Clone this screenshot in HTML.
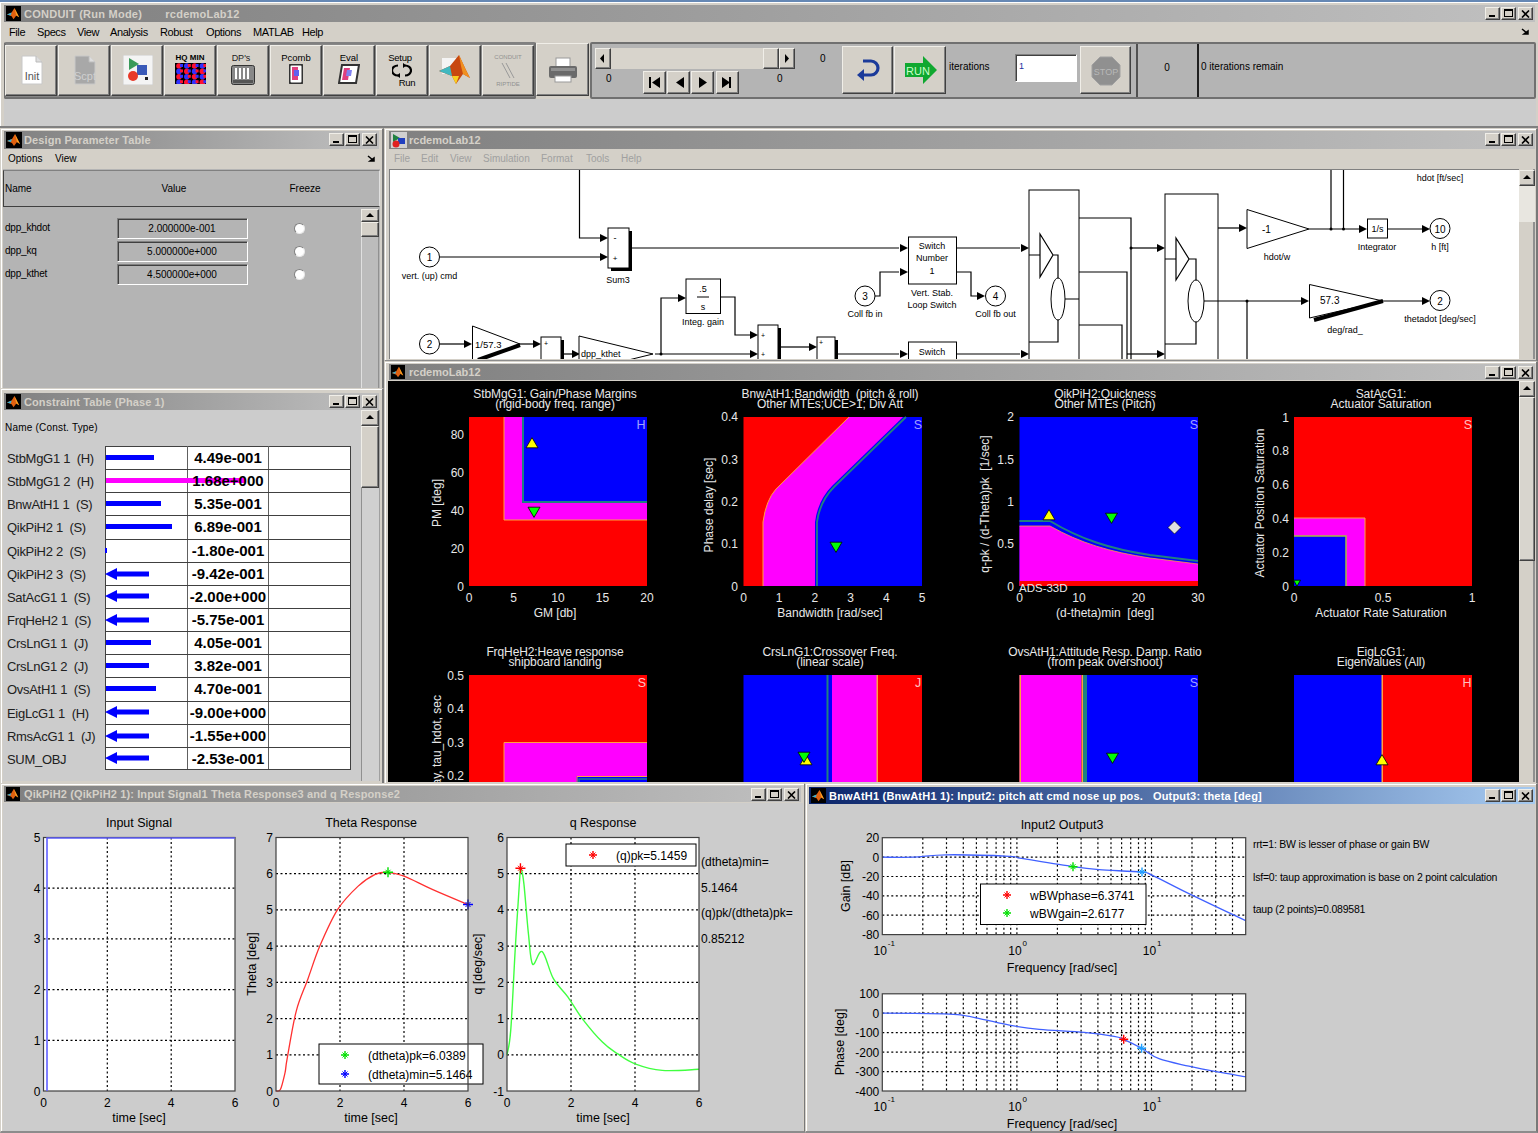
<!DOCTYPE html><html><head><meta charset="utf-8"><style>html,body{margin:0;padding:0;width:1538px;height:1133px;overflow:hidden;position:relative;font-family:"Liberation Sans",sans-serif;background:#d4d0c8}</style></head><body><div style="position:absolute;left:0px;top:0px;width:1538px;height:2px;background:#6688b4"></div><div style="position:absolute;left:0px;top:2px;width:1538px;height:1131px;background:#d4d0c8"></div><div style="position:absolute;left:0px;top:2px;width:1538px;height:1px;background:#fff"></div><div style="position:absolute;left:0px;top:2px;width:1px;height:1131px;background:#fff"></div><div style="position:absolute;left:4px;top:5px;width:1531px;height:17px;background:linear-gradient(to right,#808080,#c0c0c0)"></div><svg style="position:absolute;left:6px;top:6px" width="15" height="15" viewBox="0 0 16 16"><rect width="16" height="16" fill="#000"/><path d="M1 9 L6 7 L9 2 L12 8 L14 12 L11 10 L8 14 L6 11 Z" fill="#e06010"/><path d="M9 2 L12 8 L14 12 L11 10 Z" fill="#f8a020"/><path d="M1 9 L6 7 L5 10 Z" fill="#30b0d8"/></svg><div style="position:absolute;left:24px;top:7px;font-size:11px;line-height:14px;color:#d4d0c8;font-weight:bold;white-space:nowrap;letter-spacing:0.25px">CONDUIT (Run Mode) &nbsp; &nbsp; &nbsp; rcdemoLab12</div><div style="position:absolute;left:1485px;top:7px;width:15px;height:13px;background:#d4d0c8;box-sizing:border-box;border-top:1px solid #f0eee8;border-left:1px solid #f0eee8;border-right:1px solid #404040;border-bottom:1px solid #404040;box-shadow:inset -1px -1px 0 #808080;"></div><div style="position:absolute;left:1489px;top:15px;width:6px;height:2px;background:#000"></div><div style="position:absolute;left:1501px;top:7px;width:15px;height:13px;background:#d4d0c8;box-sizing:border-box;border-top:1px solid #f0eee8;border-left:1px solid #f0eee8;border-right:1px solid #404040;border-bottom:1px solid #404040;box-shadow:inset -1px -1px 0 #808080;"></div><div style="position:absolute;left:1504px;top:9px;width:9px;height:8px;box-sizing:border-box;border:1px solid #000;border-top:2px solid #000"></div><div style="position:absolute;left:1518px;top:7px;width:15px;height:13px;background:#d4d0c8;box-sizing:border-box;border-top:1px solid #f0eee8;border-left:1px solid #f0eee8;border-right:1px solid #404040;border-bottom:1px solid #404040;box-shadow:inset -1px -1px 0 #808080;"></div><svg style="position:absolute;left:1521px;top:10px" width="9" height="8"><path d="M1 0.5 L8 7.5 M8 0.5 L1 7.5" stroke="#000" stroke-width="1.6"/></svg><div style="position:absolute;left:9px;top:26px;font-size:11px;line-height:13px;color:#000;font-weight:normal;white-space:nowrap;letter-spacing:-0.4px">File</div><div style="position:absolute;left:37px;top:26px;font-size:11px;line-height:13px;color:#000;font-weight:normal;white-space:nowrap;letter-spacing:-0.4px">Specs</div><div style="position:absolute;left:77px;top:26px;font-size:11px;line-height:13px;color:#000;font-weight:normal;white-space:nowrap;letter-spacing:-0.4px">View</div><div style="position:absolute;left:110px;top:26px;font-size:11px;line-height:13px;color:#000;font-weight:normal;white-space:nowrap;letter-spacing:-0.4px">Analysis</div><div style="position:absolute;left:160px;top:26px;font-size:11px;line-height:13px;color:#000;font-weight:normal;white-space:nowrap;letter-spacing:-0.4px">Robust</div><div style="position:absolute;left:206px;top:26px;font-size:11px;line-height:13px;color:#000;font-weight:normal;white-space:nowrap;letter-spacing:-0.4px">Options</div><div style="position:absolute;left:253px;top:26px;font-size:11px;line-height:13px;color:#000;font-weight:normal;white-space:nowrap;letter-spacing:-0.4px">MATLAB</div><div style="position:absolute;left:302px;top:26px;font-size:11px;line-height:13px;color:#000;font-weight:normal;white-space:nowrap;letter-spacing:-0.4px">Help</div><svg style="position:absolute;left:1521px;top:28px" width="8" height="8"><path d="M1 1 L6 5 M3 6 L7 6 L7 3 Z" stroke="#000" stroke-width="1.5" fill="#000"/></svg><div style="position:absolute;left:4px;top:42px;width:532px;height:57px;box-sizing:border-box;border:2px solid #707070;border-top:2px solid #808080;background:#888;border-radius:2px"></div><div style="position:absolute;left:5px;top:45px;width:52px;height:51px;background:#d4d0c8;box-sizing:border-box;border-top:1px solid #f0eee8;border-left:1px solid #f0eee8;border-right:1px solid #404040;border-bottom:1px solid #404040;box-shadow:inset -1px -1px 0 #808080;"></div><svg style="position:absolute;left:19px;top:55px" width="26" height="30"><path d="M3 1 L17 1 L23 7 L23 29 L3 29 Z" fill="#fff" stroke="#c8c8c8"/><path d="M17 1 L17 7 L23 7" fill="#ddd" stroke="#bbb"/><text x="13" y="25" font-family="Liberation Sans" font-size="11" text-anchor="middle" fill="#555">Init</text></svg><div style="position:absolute;left:58px;top:45px;width:52px;height:51px;background:#d4d0c8;box-sizing:border-box;border-top:1px solid #f0eee8;border-left:1px solid #f0eee8;border-right:1px solid #404040;border-bottom:1px solid #404040;box-shadow:inset -1px -1px 0 #808080;"></div><svg style="position:absolute;left:72px;top:55px" width="26" height="30"><path d="M3 1 L17 1 L23 7 L23 29 L3 29 Z" fill="#a8a8a8" stroke="#c8c8c8"/><path d="M17 1 L17 7 L23 7" fill="#ddd" stroke="#bbb"/><text x="13" y="25" font-family="Liberation Sans" font-size="11" text-anchor="middle" fill="#d0d0d0">Scpt</text></svg><div style="position:absolute;left:111px;top:45px;width:52px;height:51px;background:#d4d0c8;box-sizing:border-box;border-top:1px solid #f0eee8;border-left:1px solid #f0eee8;border-right:1px solid #404040;border-bottom:1px solid #404040;box-shadow:inset -1px -1px 0 #808080;"></div><svg style="position:absolute;left:123px;top:55px" width="30" height="30"><rect x="0" y="0" width="30" height="30" fill="#f4f4f4" stroke="#ccc"/><path d="M6 3 L16 9 L6 15 Z" fill="#3a9a5a"/><rect x="14" y="10" width="10" height="10" fill="#3a5ab8"/><circle cx="10" cy="21" r="5" fill="#e83828"/><rect x="22" y="22" width="3" height="3" fill="#222"/></svg><div style="position:absolute;left:164px;top:45px;width:52px;height:51px;background:#d4d0c8;box-sizing:border-box;border-top:1px solid #f0eee8;border-left:1px solid #f0eee8;border-right:1px solid #404040;border-bottom:1px solid #404040;box-shadow:inset -1px -1px 0 #808080;"></div><div style="position:absolute;left:-210px;width:800px;text-align:center;top:53px;font-size:8px;line-height:9px;color:#000;font-weight:bold;white-space:nowrap;">HQ MIN</div><svg style="position:absolute;left:175px;top:63px" width="31" height="21"><rect width="31" height="21" fill="#000"/><circle cx="4.0" cy="3.0" r="2.8" fill="#ff1030"/><rect x="5.0" y="1.0" width="3" height="3" fill="#3030ff"/><circle cx="11.8" cy="3.0" r="2.8" fill="#3030ff"/><rect x="12.8" y="1.0" width="3" height="3" fill="#ff1030"/><circle cx="19.6" cy="3.0" r="2.8" fill="#ff1030"/><rect x="20.6" y="1.0" width="3" height="3" fill="#3030ff"/><circle cx="27.4" cy="3.0" r="2.8" fill="#3030ff"/><rect x="28.4" y="1.0" width="3" height="3" fill="#ff1030"/><circle cx="4.0" cy="8.4" r="2.8" fill="#3030ff"/><rect x="5.0" y="6.4" width="3" height="3" fill="#ff1030"/><circle cx="11.8" cy="8.4" r="2.8" fill="#ff1030"/><rect x="12.8" y="6.4" width="3" height="3" fill="#3030ff"/><circle cx="19.6" cy="8.4" r="2.8" fill="#3030ff"/><rect x="20.6" y="6.4" width="3" height="3" fill="#ff1030"/><circle cx="27.4" cy="8.4" r="2.8" fill="#ff1030"/><rect x="28.4" y="6.4" width="3" height="3" fill="#3030ff"/><circle cx="4.0" cy="13.8" r="2.8" fill="#ff1030"/><rect x="5.0" y="11.8" width="3" height="3" fill="#3030ff"/><circle cx="11.8" cy="13.8" r="2.8" fill="#3030ff"/><rect x="12.8" y="11.8" width="3" height="3" fill="#ff1030"/><circle cx="19.6" cy="13.8" r="2.8" fill="#ff1030"/><rect x="20.6" y="11.8" width="3" height="3" fill="#3030ff"/><circle cx="27.4" cy="13.8" r="2.8" fill="#3030ff"/><rect x="28.4" y="11.8" width="3" height="3" fill="#ff1030"/><circle cx="4.0" cy="19.200000000000003" r="2.8" fill="#3030ff"/><rect x="5.0" y="17.200000000000003" width="3" height="3" fill="#ff1030"/><circle cx="11.8" cy="19.200000000000003" r="2.8" fill="#ff1030"/><rect x="12.8" y="17.200000000000003" width="3" height="3" fill="#3030ff"/><circle cx="19.6" cy="19.200000000000003" r="2.8" fill="#3030ff"/><rect x="20.6" y="17.200000000000003" width="3" height="3" fill="#ff1030"/><circle cx="27.4" cy="19.200000000000003" r="2.8" fill="#ff1030"/><rect x="28.4" y="17.200000000000003" width="3" height="3" fill="#3030ff"/></svg><div style="position:absolute;left:217px;top:45px;width:52px;height:51px;background:#d4d0c8;box-sizing:border-box;border-top:1px solid #f0eee8;border-left:1px solid #f0eee8;border-right:1px solid #404040;border-bottom:1px solid #404040;box-shadow:inset -1px -1px 0 #808080;"></div><div style="position:absolute;left:-159px;width:800px;text-align:center;top:53px;font-size:9px;line-height:10px;color:#222;font-weight:normal;white-space:nowrap;">DP's</div><svg style="position:absolute;left:231px;top:65px" width="24" height="20"><rect x="0.5" y="0.5" width="23" height="19" rx="2" fill="#888" stroke="#333"/><path d="M5 3 V14 M9 3 V14 M13 3 V14 M17 3 V14" stroke="#fff" stroke-width="2"/><rect x="2" y="15" width="20" height="3" fill="#555"/></svg><div style="position:absolute;left:270px;top:45px;width:52px;height:51px;background:#d4d0c8;box-sizing:border-box;border-top:1px solid #f0eee8;border-left:1px solid #f0eee8;border-right:1px solid #404040;border-bottom:1px solid #404040;box-shadow:inset -1px -1px 0 #808080;"></div><div style="position:absolute;left:-104px;width:800px;text-align:center;top:53px;font-size:9.5px;line-height:10px;color:#000;font-weight:normal;white-space:nowrap;">Pcomb</div><svg style="position:absolute;left:289px;top:64px" width="14" height="20"><rect x="0.5" y="0.5" width="13" height="19" rx="2" fill="#fff" stroke="#333" stroke-width="2"/><rect x="3" y="3" width="6" height="13" fill="#e04080"/><rect x="5" y="6" width="5" height="6" fill="#6060f0"/></svg><div style="position:absolute;left:323px;top:45px;width:52px;height:51px;background:#d4d0c8;box-sizing:border-box;border-top:1px solid #f0eee8;border-left:1px solid #f0eee8;border-right:1px solid #404040;border-bottom:1px solid #404040;box-shadow:inset -1px -1px 0 #808080;"></div><div style="position:absolute;left:-51px;width:800px;text-align:center;top:53px;font-size:9.5px;line-height:10px;color:#000;font-weight:normal;white-space:nowrap;">Eval</div><svg style="position:absolute;left:338px;top:64px" width="22" height="20"><path d="M4 1 L21 1 L18 19 L1 19 Z" fill="#fff" stroke="#333" stroke-width="2"/><path d="M6 4 L12 4 L10 16 L4 16 Z" fill="#e04080"/><path d="M9 6 L14 6 L13 12 L8 12 Z" fill="#8080f0"/></svg><div style="position:absolute;left:376px;top:45px;width:52px;height:51px;background:#d4d0c8;box-sizing:border-box;border-top:1px solid #f0eee8;border-left:1px solid #f0eee8;border-right:1px solid #404040;border-bottom:1px solid #404040;box-shadow:inset -1px -1px 0 #808080;"></div><div style="position:absolute;left:0px;width:800px;text-align:center;top:53px;font-size:9.5px;line-height:10px;color:#000;font-weight:normal;white-space:nowrap;letter-spacing:-0.3px">Setup</div><svg style="position:absolute;left:392px;top:63px" width="20" height="15"><path d="M6 2.5 A6 5 0 1 0 6 12.5" fill="none" stroke="#000" stroke-width="2.2"/><path d="M13 12.5 A6 5 0 1 0 13 2.5" fill="none" stroke="#000" stroke-width="2.2"/><path d="M11 0 L14.5 2.5 L11 5 Z" fill="#000"/><path d="M8 10 L4.5 12.5 L8 15 Z" fill="#000"/></svg><div style="position:absolute;left:7px;width:800px;text-align:center;top:78px;font-size:9.5px;line-height:10px;color:#000;font-weight:normal;white-space:nowrap;letter-spacing:-0.3px">Run</div><div style="position:absolute;left:429px;top:45px;width:52px;height:51px;background:#d4d0c8;box-sizing:border-box;border-top:1px solid #f0eee8;border-left:1px solid #f0eee8;border-right:1px solid #404040;border-bottom:1px solid #404040;box-shadow:inset -1px -1px 0 #808080;"></div><svg style="position:absolute;left:439px;top:54px" width="32" height="32"><rect x="3" y="4" width="14" height="16" fill="#f4f4f4"/><path d="M0 17 L11 12 L20 1 L26 14 L31 24 L24 20 L17 30 L13 22 Z" fill="#c84810"/><path d="M20 1 L26 14 L31 24 L24 20 L22 12 Z" fill="#f09020"/><path d="M0 17 L11 12 L13 22 Z" fill="#40b8c0"/><path d="M17 30 L13 22 L20 22 Z" fill="#f8d020"/></svg><div style="position:absolute;left:482px;top:45px;width:52px;height:51px;background:#d4d0c8;box-sizing:border-box;border-top:1px solid #f0eee8;border-left:1px solid #f0eee8;border-right:1px solid #404040;border-bottom:1px solid #404040;box-shadow:inset -1px -1px 0 #808080;"></div><div style="position:absolute;left:108px;width:800px;text-align:center;top:54px;font-size:6px;line-height:7px;color:#909090;font-weight:normal;white-space:nowrap;">CONDUIT</div><svg style="position:absolute;left:500px;top:62px" width="16" height="18"><path d="M2 1 L10 16 M6 1 L14 16" stroke="#999" stroke-width="1"/></svg><div style="position:absolute;left:108px;width:800px;text-align:center;top:81px;font-size:6px;line-height:7px;color:#909090;font-weight:normal;white-space:nowrap;">RIPTIDE</div><div style="position:absolute;left:536px;top:43px;width:53px;height:53px;background:#d4d0c8;box-sizing:border-box;border-top:1px solid #f0eee8;border-left:1px solid #f0eee8;border-right:1px solid #404040;border-bottom:1px solid #404040;box-shadow:inset -1px -1px 0 #808080;"></div><svg style="position:absolute;left:548px;top:57px" width="30" height="28"><rect x="8" y="1" width="14" height="9" fill="#fff" stroke="#999"/><rect x="1" y="9" width="28" height="12" rx="2" fill="#6a6a6a"/><rect x="3" y="11" width="24" height="3" fill="#909090"/><rect x="7" y="19" width="16" height="6" fill="#fff" stroke="#999"/></svg><div style="position:absolute;left:590px;top:42px;width:946px;height:57px;box-sizing:border-box;border:2px solid #707070;background:#b4b4b4;border-radius:2px"></div><div style="position:absolute;left:595px;top:48px;width:200px;height:21px;background:#d8d4cc"></div><div style="position:absolute;left:595px;top:48px;width:16px;height:21px;background:#d4d0c8;box-sizing:border-box;border-top:1px solid #f0eee8;border-left:1px solid #f0eee8;border-right:1px solid #404040;border-bottom:1px solid #404040;box-shadow:inset -1px -1px 0 #808080;"></div><svg style="position:absolute;left:600px;top:54px" width="6" height="9"><path d="M4 0 L0 4.5 L4 9 Z" fill="#000"/></svg><div style="position:absolute;left:763px;top:48px;width:16px;height:21px;background:#d4d0c8;box-sizing:border-box;border-top:1px solid #f0eee8;border-left:1px solid #f0eee8;border-right:1px solid #404040;border-bottom:1px solid #404040;box-shadow:inset -1px -1px 0 #808080;"></div><div style="position:absolute;left:779px;top:48px;width:16px;height:21px;background:#d4d0c8;box-sizing:border-box;border-top:1px solid #f0eee8;border-left:1px solid #f0eee8;border-right:1px solid #404040;border-bottom:1px solid #404040;box-shadow:inset -1px -1px 0 #808080;"></div><svg style="position:absolute;left:785px;top:54px" width="6" height="9"><path d="M0 0 L4 4.5 L0 9 Z" fill="#000"/></svg><div style="position:absolute;left:606px;top:73px;font-size:10px;line-height:12px;color:#000;font-weight:normal;white-space:nowrap;">0</div><div style="position:absolute;left:777px;top:73px;font-size:10px;line-height:12px;color:#000;font-weight:normal;white-space:nowrap;">0</div><div style="position:absolute;left:820px;top:53px;font-size:10px;line-height:12px;color:#000;font-weight:normal;white-space:nowrap;">0</div><div style="position:absolute;left:643px;top:71px;width:23px;height:23px;background:#d4d0c8;box-sizing:border-box;border-top:1px solid #f0eee8;border-left:1px solid #f0eee8;border-right:1px solid #404040;border-bottom:1px solid #404040;box-shadow:inset -1px -1px 0 #808080;"></div><div style="position:absolute;left:667px;top:71px;width:23px;height:23px;background:#d4d0c8;box-sizing:border-box;border-top:1px solid #f0eee8;border-left:1px solid #f0eee8;border-right:1px solid #404040;border-bottom:1px solid #404040;box-shadow:inset -1px -1px 0 #808080;"></div><div style="position:absolute;left:691px;top:71px;width:23px;height:23px;background:#d4d0c8;box-sizing:border-box;border-top:1px solid #f0eee8;border-left:1px solid #f0eee8;border-right:1px solid #404040;border-bottom:1px solid #404040;box-shadow:inset -1px -1px 0 #808080;"></div><div style="position:absolute;left:716px;top:71px;width:23px;height:23px;background:#d4d0c8;box-sizing:border-box;border-top:1px solid #f0eee8;border-left:1px solid #f0eee8;border-right:1px solid #404040;border-bottom:1px solid #404040;box-shadow:inset -1px -1px 0 #808080;"></div><svg style="position:absolute;left:649px;top:76px" width="84" height="13"><rect x="0" y="1" width="2" height="11" fill="#000"/><path d="M11 1 L3 6.5 L11 12 Z" fill="#000"/><path d="M35 1 L27 6.5 L35 12 Z" fill="#000"/><path d="M50 1 L58 6.5 L50 12 Z" fill="#000"/><path d="M73 1 L81 6.5 L73 12 Z" fill="#000"/><rect x="80" y="1" width="2" height="11" fill="#000"/></svg><div style="position:absolute;left:842px;top:46px;width:51px;height:48px;background:#d4d0c8;box-sizing:border-box;border-top:1px solid #f0eee8;border-left:1px solid #f0eee8;border-right:1px solid #404040;border-bottom:1px solid #404040;box-shadow:inset -1px -1px 0 #808080;"></div><svg style="position:absolute;left:855px;top:56px" width="26" height="26"><path d="M8 5 L16 5 A7 7 0 0 1 16 19 L7 19" fill="none" stroke="#1a3a9a" stroke-width="3.2"/><path d="M9 13 L2 19 L9 25 Z" fill="#1a3a9a"/></svg><div style="position:absolute;left:894px;top:46px;width:52px;height:48px;background:#d4d0c8;box-sizing:border-box;border-top:1px solid #f0eee8;border-left:1px solid #f0eee8;border-right:1px solid #404040;border-bottom:1px solid #404040;box-shadow:inset -1px -1px 0 #808080;"></div><svg style="position:absolute;left:904px;top:55px" width="34" height="30"><path d="M1 8 L19 8 L19 1 L33 15 L19 29 L19 22 L1 22 Z" fill="#10a830"/><text x="14" y="20" font-family="Liberation Sans" font-size="11" fill="#c8ffc8" text-anchor="middle">RUN</text></svg><div style="position:absolute;left:949px;top:61px;font-size:10px;line-height:12px;color:#000;font-weight:normal;white-space:nowrap;">iterations</div><div style="position:absolute;left:1015px;top:54px;width:62px;height:28px;background:#fff;box-sizing:border-box;border-top:1px solid #808080;border-left:1px solid #808080;border-right:1px solid #fff;border-bottom:1px solid #fff;box-shadow:inset 1px 1px 0 #404040;"></div><div style="position:absolute;left:1019px;top:61px;font-size:9px;line-height:11px;color:#2030a0;font-weight:normal;white-space:nowrap;">1</div><div style="position:absolute;left:1080px;top:46px;width:51px;height:48px;background:#d4d0c8;box-sizing:border-box;border-top:1px solid #f0eee8;border-left:1px solid #f0eee8;border-right:1px solid #404040;border-bottom:1px solid #404040;box-shadow:inset -1px -1px 0 #808080;"></div><svg style="position:absolute;left:1091px;top:56px" width="30" height="30"><path d="M9 1 L21 1 L29 9 L29 21 L21 29 L9 29 L1 21 L1 9 Z" fill="#909090" stroke="#a0a0a0"/><text x="15" y="19" font-family="Liberation Sans" font-size="9" fill="#b8b8b8" text-anchor="middle">STOP</text></svg><div style="position:absolute;left:1136px;top:44px;width:2px;height:53px;background:#505050"></div><div style="position:absolute;left:1197px;top:44px;width:2px;height:53px;background:#202020"></div><div style="position:absolute;left:767px;width:800px;text-align:center;top:62px;font-size:10px;line-height:12px;color:#000;font-weight:normal;white-space:nowrap;">0</div><div style="position:absolute;left:1201px;top:61px;font-size:10px;line-height:12px;color:#000;font-weight:normal;white-space:nowrap;">0 iterations remain</div><div style="position:absolute;left:4px;top:99px;width:1532px;height:27px;background:#cccccc"></div><div style="position:absolute;left:0px;top:126px;width:1538px;height:2px;background:#808080"></div><div style="position:absolute;left:0px;top:128px;width:384px;height:264px;background:#d4d0c8;box-sizing:border-box;border-top:1px solid #d4d0c8;border-left:1px solid #d4d0c8;border-right:2px solid #787878;border-bottom:2px solid #8c8c8c;box-shadow:inset 1px 1px 0 #fff"></div><div style="position:absolute;left:4px;top:131px;width:375px;height:18px;background:linear-gradient(to right,#808080,#c0c0c0)"></div><svg style="position:absolute;left:6px;top:132px" width="16" height="16" viewBox="0 0 16 16"><rect width="16" height="16" fill="#000"/><path d="M1 9 L6 7 L9 2 L12 8 L14 12 L11 10 L8 14 L6 11 Z" fill="#e06010"/><path d="M9 2 L12 8 L14 12 L11 10 Z" fill="#f8a020"/><path d="M1 9 L6 7 L5 10 Z" fill="#30b0d8"/></svg><div style="position:absolute;left:24px;top:133px;font-size:11px;line-height:15px;color:#d4d0c8;font-weight:bold;white-space:nowrap;letter-spacing:0.1px">Design Parameter Table</div><div style="position:absolute;left:329px;top:133px;width:15px;height:13px;background:#d4d0c8;box-sizing:border-box;border-top:1px solid #f0eee8;border-left:1px solid #f0eee8;border-right:1px solid #404040;border-bottom:1px solid #404040;box-shadow:inset -1px -1px 0 #808080;"></div><div style="position:absolute;left:333px;top:141px;width:6px;height:2px;background:#000"></div><div style="position:absolute;left:345px;top:133px;width:15px;height:13px;background:#d4d0c8;box-sizing:border-box;border-top:1px solid #f0eee8;border-left:1px solid #f0eee8;border-right:1px solid #404040;border-bottom:1px solid #404040;box-shadow:inset -1px -1px 0 #808080;"></div><div style="position:absolute;left:348px;top:135px;width:9px;height:8px;box-sizing:border-box;border:1px solid #000;border-top:2px solid #000"></div><div style="position:absolute;left:362px;top:133px;width:15px;height:13px;background:#d4d0c8;box-sizing:border-box;border-top:1px solid #f0eee8;border-left:1px solid #f0eee8;border-right:1px solid #404040;border-bottom:1px solid #404040;box-shadow:inset -1px -1px 0 #808080;"></div><svg style="position:absolute;left:365px;top:136px" width="9" height="8"><path d="M1 0.5 L8 7.5 M8 0.5 L1 7.5" stroke="#000" stroke-width="1.6"/></svg><div style="position:absolute;left:8px;top:153px;font-size:10px;line-height:12px;color:#000;font-weight:normal;white-space:nowrap;">Options</div><div style="position:absolute;left:55px;top:153px;font-size:10px;line-height:12px;color:#000;font-weight:normal;white-space:nowrap;">View</div><svg style="position:absolute;left:367px;top:155px" width="8" height="8"><path d="M1 1 L6 5 M3 6 L7 6 L7 3 Z" stroke="#000" stroke-width="1.5" fill="#000"/></svg><div style="position:absolute;left:3px;top:169px;width:377px;height:221px;background:#b4b4b4"></div><div style="position:absolute;left:3px;top:170px;width:377px;height:37px;box-sizing:border-box;border:1px solid #404040;border-right:1px solid #e0e0e0;border-top:1px solid #808080;background:#b4b4b4"></div><div style="position:absolute;left:5px;top:183px;font-size:10px;line-height:12px;color:#000;font-weight:normal;white-space:nowrap;">Name</div><div style="position:absolute;left:-226px;width:800px;text-align:center;top:183px;font-size:10px;line-height:12px;color:#000;font-weight:normal;white-space:nowrap;">Value</div><div style="position:absolute;left:-95px;width:800px;text-align:center;top:183px;font-size:10px;line-height:12px;color:#000;font-weight:normal;white-space:nowrap;">Freeze</div><div style="position:absolute;left:5px;top:222px;font-size:10px;line-height:12px;color:#000;font-weight:normal;white-space:nowrap;letter-spacing:-0.2px">dpp_khdot</div><div style="position:absolute;left:117px;top:218px;width:131px;height:21px;background:#b4b4b4;box-sizing:border-box;border-top:1px solid #808080;border-left:1px solid #808080;border-right:1px solid #fff;border-bottom:1px solid #fff;box-shadow:inset 1px 1px 0 #404040;"></div><div style="position:absolute;left:-218px;width:800px;text-align:center;top:223px;font-size:10px;line-height:12px;color:#000;font-weight:normal;white-space:nowrap;">2.000000e-001</div><div style="position:absolute;left:294px;top:223px;width:11px;height:11px;border-radius:50%;background:#fff;box-sizing:border-box;border:1px solid #808080;border-right-color:#e8e8e8;border-bottom-color:#e8e8e8"></div><div style="position:absolute;left:5px;top:245px;font-size:10px;line-height:12px;color:#000;font-weight:normal;white-space:nowrap;letter-spacing:-0.2px">dpp_kq</div><div style="position:absolute;left:117px;top:241px;width:131px;height:21px;background:#b4b4b4;box-sizing:border-box;border-top:1px solid #808080;border-left:1px solid #808080;border-right:1px solid #fff;border-bottom:1px solid #fff;box-shadow:inset 1px 1px 0 #404040;"></div><div style="position:absolute;left:-218px;width:800px;text-align:center;top:246px;font-size:10px;line-height:12px;color:#000;font-weight:normal;white-space:nowrap;">5.000000e+000</div><div style="position:absolute;left:294px;top:246px;width:11px;height:11px;border-radius:50%;background:#fff;box-sizing:border-box;border:1px solid #808080;border-right-color:#e8e8e8;border-bottom-color:#e8e8e8"></div><div style="position:absolute;left:5px;top:268px;font-size:10px;line-height:12px;color:#000;font-weight:normal;white-space:nowrap;letter-spacing:-0.2px">dpp_kthet</div><div style="position:absolute;left:117px;top:264px;width:131px;height:21px;background:#b4b4b4;box-sizing:border-box;border-top:1px solid #808080;border-left:1px solid #808080;border-right:1px solid #fff;border-bottom:1px solid #fff;box-shadow:inset 1px 1px 0 #404040;"></div><div style="position:absolute;left:-218px;width:800px;text-align:center;top:269px;font-size:10px;line-height:12px;color:#000;font-weight:normal;white-space:nowrap;">4.500000e+000</div><div style="position:absolute;left:294px;top:269px;width:11px;height:11px;border-radius:50%;background:#fff;box-sizing:border-box;border:1px solid #808080;border-right-color:#e8e8e8;border-bottom-color:#e8e8e8"></div><div style="position:absolute;left:361px;top:209px;width:18px;height:180px;background:#bcbcbc;border-left:1px solid #e0e0e0;border-right:1px solid #909090;box-sizing:border-box"></div><div style="position:absolute;left:361px;top:209px;width:18px;height:13px;background:#d4d0c8;box-sizing:border-box;border-top:1px solid #f0eee8;border-left:1px solid #f0eee8;border-right:1px solid #404040;border-bottom:1px solid #404040;box-shadow:inset -1px -1px 0 #808080;"></div><svg style="position:absolute;left:366px;top:213px" width="8" height="5"><path d="M0 4 L4 0 L8 4 Z" fill="#000"/></svg><div style="position:absolute;left:361px;top:222px;width:18px;height:15px;background:#d4d0c8;box-sizing:border-box;border-top:1px solid #f0eee8;border-left:1px solid #f0eee8;border-right:1px solid #404040;border-bottom:1px solid #404040;box-shadow:inset -1px -1px 0 #808080;"></div><div style="position:absolute;left:0px;top:388px;width:384px;height:402px;background:#d4d0c8;box-sizing:border-box;border-top:1px solid #d4d0c8;border-left:1px solid #d4d0c8;border-right:2px solid #787878;border-bottom:2px solid #8c8c8c;box-shadow:inset 1px 1px 0 #fff"></div><div style="position:absolute;left:4px;top:393px;width:375px;height:17px;background:linear-gradient(to right,#808080,#c0c0c0)"></div><svg style="position:absolute;left:6px;top:394px" width="15" height="15" viewBox="0 0 16 16"><rect width="16" height="16" fill="#000"/><path d="M1 9 L6 7 L9 2 L12 8 L14 12 L11 10 L8 14 L6 11 Z" fill="#e06010"/><path d="M9 2 L12 8 L14 12 L11 10 Z" fill="#f8a020"/><path d="M1 9 L6 7 L5 10 Z" fill="#30b0d8"/></svg><div style="position:absolute;left:24px;top:395px;font-size:11px;line-height:14px;color:#d4d0c8;font-weight:bold;white-space:nowrap;letter-spacing:0.1px">Constraint Table (Phase 1)</div><div style="position:absolute;left:329px;top:395px;width:15px;height:13px;background:#d4d0c8;box-sizing:border-box;border-top:1px solid #f0eee8;border-left:1px solid #f0eee8;border-right:1px solid #404040;border-bottom:1px solid #404040;box-shadow:inset -1px -1px 0 #808080;"></div><div style="position:absolute;left:333px;top:403px;width:6px;height:2px;background:#000"></div><div style="position:absolute;left:345px;top:395px;width:15px;height:13px;background:#d4d0c8;box-sizing:border-box;border-top:1px solid #f0eee8;border-left:1px solid #f0eee8;border-right:1px solid #404040;border-bottom:1px solid #404040;box-shadow:inset -1px -1px 0 #808080;"></div><div style="position:absolute;left:348px;top:397px;width:9px;height:8px;box-sizing:border-box;border:1px solid #000;border-top:2px solid #000"></div><div style="position:absolute;left:362px;top:395px;width:15px;height:13px;background:#d4d0c8;box-sizing:border-box;border-top:1px solid #f0eee8;border-left:1px solid #f0eee8;border-right:1px solid #404040;border-bottom:1px solid #404040;box-shadow:inset -1px -1px 0 #808080;"></div><svg style="position:absolute;left:365px;top:398px" width="9" height="8"><path d="M1 0.5 L8 7.5 M8 0.5 L1 7.5" stroke="#000" stroke-width="1.6"/></svg><div style="position:absolute;left:3px;top:410px;width:377px;height:371px;background:#cccccc"></div><div style="position:absolute;left:5px;top:422px;font-size:10px;line-height:12px;color:#000;font-weight:normal;white-space:nowrap;letter-spacing:0.2px">Name (Const. Type)</div><div style="position:absolute;left:361px;top:410px;width:19px;height:371px;background:#d0d0d0;border-left:1px solid #909090;border-right:1px solid #a0a0a0;box-sizing:border-box"></div><div style="position:absolute;left:361px;top:410px;width:18px;height:16px;background:#d4d0c8;box-sizing:border-box;border-top:1px solid #f0eee8;border-left:1px solid #f0eee8;border-right:1px solid #404040;border-bottom:1px solid #404040;box-shadow:inset -1px -1px 0 #808080;"></div><svg style="position:absolute;left:366px;top:415px" width="8" height="5"><path d="M0 4 L4 0 L8 4 Z" fill="#000"/></svg><div style="position:absolute;left:361px;top:426px;width:18px;height:62px;background:#d4d0c8;box-sizing:border-box;border-top:1px solid #f0eee8;border-left:1px solid #f0eee8;border-right:1px solid #404040;border-bottom:1px solid #404040;box-shadow:inset -1px -1px 0 #808080;"></div><div style="position:absolute;left:105px;top:446px;width:246px;height:324px;background:#fff;box-sizing:border-box;border:1px solid #404040"></div><div style="position:absolute;left:187px;top:446px;width:1px;height:323px;background:#606060"></div><div style="position:absolute;left:268px;top:446px;width:1px;height:323px;background:#606060"></div><div style="position:absolute;left:106px;top:455px;width:48px;height:5px;background:#0000ff"></div><div style="position:absolute;left:105px;top:469px;width:246px;height:1px;background:#404040"></div><div style="position:absolute;left:106px;top:478px;width:139px;height:5px;background:#ff00ff"></div><div style="position:absolute;left:105px;top:492px;width:246px;height:1px;background:#404040"></div><div style="position:absolute;left:106px;top:501px;width:55px;height:5px;background:#0000ff"></div><div style="position:absolute;left:105px;top:515px;width:246px;height:1px;background:#404040"></div><div style="position:absolute;left:106px;top:524px;width:66px;height:5px;background:#0000ff"></div><div style="position:absolute;left:105px;top:539px;width:246px;height:1px;background:#404040"></div><div style="position:absolute;left:105px;top:548px;width:2px;height:5px;background:#0000ff"></div><div style="position:absolute;left:105px;top:562px;width:246px;height:1px;background:#404040"></div><svg style="position:absolute;left:105px;top:568px" width="46" height="12"><path d="M0 6 L12 0 L12 3.5 L44 3.5 L44 8.5 L12 8.5 L12 12 Z" fill="#0000ff"/></svg><div style="position:absolute;left:105px;top:585px;width:246px;height:1px;background:#404040"></div><svg style="position:absolute;left:105px;top:590px" width="46" height="12"><path d="M0 6 L12 0 L12 3.5 L44 3.5 L44 8.5 L12 8.5 L12 12 Z" fill="#0000ff"/></svg><div style="position:absolute;left:105px;top:608px;width:246px;height:1px;background:#404040"></div><svg style="position:absolute;left:105px;top:614px" width="46" height="12"><path d="M0 6 L12 0 L12 3.5 L44 3.5 L44 8.5 L12 8.5 L12 12 Z" fill="#0000ff"/></svg><div style="position:absolute;left:105px;top:631px;width:246px;height:1px;background:#404040"></div><div style="position:absolute;left:106px;top:640px;width:45px;height:5px;background:#0000ff"></div><div style="position:absolute;left:105px;top:654px;width:246px;height:1px;background:#404040"></div><div style="position:absolute;left:106px;top:663px;width:43px;height:5px;background:#0000ff"></div><div style="position:absolute;left:105px;top:677px;width:246px;height:1px;background:#404040"></div><div style="position:absolute;left:106px;top:686px;width:50px;height:5px;background:#0000ff"></div><div style="position:absolute;left:105px;top:701px;width:246px;height:1px;background:#404040"></div><svg style="position:absolute;left:105px;top:706px" width="46" height="12"><path d="M0 6 L12 0 L12 3.5 L44 3.5 L44 8.5 L12 8.5 L12 12 Z" fill="#0000ff"/></svg><div style="position:absolute;left:105px;top:724px;width:246px;height:1px;background:#404040"></div><svg style="position:absolute;left:105px;top:730px" width="46" height="12"><path d="M0 6 L12 0 L12 3.5 L44 3.5 L44 8.5 L12 8.5 L12 12 Z" fill="#0000ff"/></svg><div style="position:absolute;left:105px;top:747px;width:246px;height:1px;background:#404040"></div><svg style="position:absolute;left:105px;top:752px" width="46" height="12"><path d="M0 6 L12 0 L12 3.5 L44 3.5 L44 8.5 L12 8.5 L12 12 Z" fill="#0000ff"/></svg><div style="position:absolute;left:7px;top:451px;font-size:13px;line-height:15px;color:#202020;font-weight:normal;white-space:nowrap;letter-spacing:-0.3px">StbMgG1 1&nbsp;&nbsp;(H)</div><div style="position:absolute;left:-172px;width:800px;text-align:center;top:450px;font-size:15px;line-height:16px;color:#000;font-weight:bold;white-space:nowrap;letter-spacing:0px">4.49e-001</div><div style="position:absolute;left:7px;top:474px;font-size:13px;line-height:15px;color:#202020;font-weight:normal;white-space:nowrap;letter-spacing:-0.3px">StbMgG1 2&nbsp;&nbsp;(H)</div><div style="position:absolute;left:-172px;width:800px;text-align:center;top:473px;font-size:15px;line-height:16px;color:#000;font-weight:bold;white-space:nowrap;letter-spacing:0px">1.68e+000</div><div style="position:absolute;left:7px;top:497px;font-size:13px;line-height:15px;color:#202020;font-weight:normal;white-space:nowrap;letter-spacing:-0.3px">BnwAtH1 1&nbsp;&nbsp;(S)</div><div style="position:absolute;left:-172px;width:800px;text-align:center;top:496px;font-size:15px;line-height:16px;color:#000;font-weight:bold;white-space:nowrap;letter-spacing:0px">5.35e-001</div><div style="position:absolute;left:7px;top:520px;font-size:13px;line-height:15px;color:#202020;font-weight:normal;white-space:nowrap;letter-spacing:-0.3px">QikPiH2 1&nbsp;&nbsp;(S)</div><div style="position:absolute;left:-172px;width:800px;text-align:center;top:519px;font-size:15px;line-height:16px;color:#000;font-weight:bold;white-space:nowrap;letter-spacing:0px">6.89e-001</div><div style="position:absolute;left:7px;top:544px;font-size:13px;line-height:15px;color:#202020;font-weight:normal;white-space:nowrap;letter-spacing:-0.3px">QikPiH2 2&nbsp;&nbsp;(S)</div><div style="position:absolute;left:-172px;width:800px;text-align:center;top:543px;font-size:15px;line-height:16px;color:#000;font-weight:bold;white-space:nowrap;letter-spacing:0px">-1.80e-001</div><div style="position:absolute;left:7px;top:567px;font-size:13px;line-height:15px;color:#202020;font-weight:normal;white-space:nowrap;letter-spacing:-0.3px">QikPiH2 3&nbsp;&nbsp;(S)</div><div style="position:absolute;left:-172px;width:800px;text-align:center;top:566px;font-size:15px;line-height:16px;color:#000;font-weight:bold;white-space:nowrap;letter-spacing:0px">-9.42e-001</div><div style="position:absolute;left:7px;top:590px;font-size:13px;line-height:15px;color:#202020;font-weight:normal;white-space:nowrap;letter-spacing:-0.3px">SatAcG1 1&nbsp;&nbsp;(S)</div><div style="position:absolute;left:-172px;width:800px;text-align:center;top:589px;font-size:15px;line-height:16px;color:#000;font-weight:bold;white-space:nowrap;letter-spacing:0px">-2.00e+000</div><div style="position:absolute;left:7px;top:613px;font-size:13px;line-height:15px;color:#202020;font-weight:normal;white-space:nowrap;letter-spacing:-0.3px">FrqHeH2 1&nbsp;&nbsp;(S)</div><div style="position:absolute;left:-172px;width:800px;text-align:center;top:612px;font-size:15px;line-height:16px;color:#000;font-weight:bold;white-space:nowrap;letter-spacing:0px">-5.75e-001</div><div style="position:absolute;left:7px;top:636px;font-size:13px;line-height:15px;color:#202020;font-weight:normal;white-space:nowrap;letter-spacing:-0.3px">CrsLnG1 1&nbsp;&nbsp;(J)</div><div style="position:absolute;left:-172px;width:800px;text-align:center;top:635px;font-size:15px;line-height:16px;color:#000;font-weight:bold;white-space:nowrap;letter-spacing:0px">4.05e-001</div><div style="position:absolute;left:7px;top:659px;font-size:13px;line-height:15px;color:#202020;font-weight:normal;white-space:nowrap;letter-spacing:-0.3px">CrsLnG1 2&nbsp;&nbsp;(J)</div><div style="position:absolute;left:-172px;width:800px;text-align:center;top:658px;font-size:15px;line-height:16px;color:#000;font-weight:bold;white-space:nowrap;letter-spacing:0px">3.82e-001</div><div style="position:absolute;left:7px;top:682px;font-size:13px;line-height:15px;color:#202020;font-weight:normal;white-space:nowrap;letter-spacing:-0.3px">OvsAtH1 1&nbsp;&nbsp;(S)</div><div style="position:absolute;left:-172px;width:800px;text-align:center;top:681px;font-size:15px;line-height:16px;color:#000;font-weight:bold;white-space:nowrap;letter-spacing:0px">4.70e-001</div><div style="position:absolute;left:7px;top:706px;font-size:13px;line-height:15px;color:#202020;font-weight:normal;white-space:nowrap;letter-spacing:-0.3px">EigLcG1 1&nbsp;&nbsp;(H)</div><div style="position:absolute;left:-172px;width:800px;text-align:center;top:705px;font-size:15px;line-height:16px;color:#000;font-weight:bold;white-space:nowrap;letter-spacing:0px">-9.00e+000</div><div style="position:absolute;left:7px;top:729px;font-size:13px;line-height:15px;color:#202020;font-weight:normal;white-space:nowrap;letter-spacing:-0.3px">RmsAcG1 1&nbsp;&nbsp;(J)</div><div style="position:absolute;left:-172px;width:800px;text-align:center;top:728px;font-size:15px;line-height:16px;color:#000;font-weight:bold;white-space:nowrap;letter-spacing:0px">-1.55e+000</div><div style="position:absolute;left:7px;top:752px;font-size:13px;line-height:15px;color:#202020;font-weight:normal;white-space:nowrap;letter-spacing:-0.3px">SUM_OBJ</div><div style="position:absolute;left:-172px;width:800px;text-align:center;top:751px;font-size:15px;line-height:16px;color:#000;font-weight:bold;white-space:nowrap;letter-spacing:0px">-2.53e-001</div><div style="position:absolute;left:384px;top:128px;width:1154px;height:234px;background:#d4d0c8;box-sizing:border-box;border-top:1px solid #d4d0c8;border-left:1px solid #d4d0c8;border-right:2px solid #787878;border-bottom:2px solid #8c8c8c;box-shadow:inset 1px 1px 0 #fff"></div><div style="position:absolute;left:389px;top:131px;width:1146px;height:18px;background:linear-gradient(to right,#808080,#c0c0c0)"></div><svg style="position:absolute;left:391px;top:132px" width="16" height="16" viewBox="0 0 16 16"><rect width="16" height="16" fill="#d0d0d0"/><path d="M2 2 L9 6 L2 10 Z" fill="#208040"/><rect x="7" y="6" width="7" height="6" fill="#2040c0"/><circle cx="5" cy="12" r="3.5" fill="#e02020"/></svg><div style="position:absolute;left:409px;top:133px;font-size:11px;line-height:15px;color:#d4d0c8;font-weight:bold;white-space:nowrap;letter-spacing:0px">rcdemoLab12</div><div style="position:absolute;left:1485px;top:133px;width:15px;height:13px;background:#d4d0c8;box-sizing:border-box;border-top:1px solid #f0eee8;border-left:1px solid #f0eee8;border-right:1px solid #404040;border-bottom:1px solid #404040;box-shadow:inset -1px -1px 0 #808080;"></div><div style="position:absolute;left:1489px;top:141px;width:6px;height:2px;background:#000"></div><div style="position:absolute;left:1501px;top:133px;width:15px;height:13px;background:#d4d0c8;box-sizing:border-box;border-top:1px solid #f0eee8;border-left:1px solid #f0eee8;border-right:1px solid #404040;border-bottom:1px solid #404040;box-shadow:inset -1px -1px 0 #808080;"></div><div style="position:absolute;left:1504px;top:135px;width:9px;height:8px;box-sizing:border-box;border:1px solid #000;border-top:2px solid #000"></div><div style="position:absolute;left:1518px;top:133px;width:15px;height:13px;background:#d4d0c8;box-sizing:border-box;border-top:1px solid #f0eee8;border-left:1px solid #f0eee8;border-right:1px solid #404040;border-bottom:1px solid #404040;box-shadow:inset -1px -1px 0 #808080;"></div><svg style="position:absolute;left:1521px;top:136px" width="9" height="8"><path d="M1 0.5 L8 7.5 M8 0.5 L1 7.5" stroke="#000" stroke-width="1.6"/></svg><div style="position:absolute;left:394px;top:153px;font-size:10px;line-height:12px;color:#a0a0a0;font-weight:normal;white-space:nowrap;">File</div><div style="position:absolute;left:421px;top:153px;font-size:10px;line-height:12px;color:#a0a0a0;font-weight:normal;white-space:nowrap;">Edit</div><div style="position:absolute;left:450px;top:153px;font-size:10px;line-height:12px;color:#a0a0a0;font-weight:normal;white-space:nowrap;">View</div><div style="position:absolute;left:483px;top:153px;font-size:10px;line-height:12px;color:#a0a0a0;font-weight:normal;white-space:nowrap;">Simulation</div><div style="position:absolute;left:541px;top:153px;font-size:10px;line-height:12px;color:#a0a0a0;font-weight:normal;white-space:nowrap;">Format</div><div style="position:absolute;left:586px;top:153px;font-size:10px;line-height:12px;color:#a0a0a0;font-weight:normal;white-space:nowrap;">Tools</div><div style="position:absolute;left:621px;top:153px;font-size:10px;line-height:12px;color:#a0a0a0;font-weight:normal;white-space:nowrap;">Help</div><div style="position:absolute;left:389px;top:169px;width:1130px;height:190px;background:#fff;box-sizing:border-box;border-top:1px solid #808080;border-left:1px solid #808080"></div><div style="position:absolute;left:1519px;top:169px;width:16px;height:190px;background:#d4d0c8;box-sizing:border-box;border-right:2px solid #909090"></div><div style="position:absolute;left:1519px;top:170px;width:16px;height:16px;background:#d4d0c8;box-sizing:border-box;border-top:1px solid #f0eee8;border-left:1px solid #f0eee8;border-right:1px solid #404040;border-bottom:1px solid #404040;box-shadow:inset -1px -1px 0 #808080;"></div><svg style="position:absolute;left:1523px;top:175px" width="8" height="5"><path d="M0 4 L4 0 L8 4 Z" fill="#000"/></svg><div style="position:absolute;left:1519px;top:186px;width:16px;height:36px;background:#e8e6e0"></div><svg style="position:absolute;left:0;top:0;pointer-events:none" width="1538" height="1133"><defs><clipPath id="simclip"><rect x="390" y="170" width="1129" height="189"/></clipPath></defs><g clip-path="url(#simclip)" font-family="Liberation Sans, sans-serif"><path d="M579.5 170 V238 H600" fill="none" stroke="#000" stroke-width="1.2"/><path d="M600 234 L608 238 L600 242 Z" fill="#000"/><rect x="611" y="231" width="21" height="40" fill="#000"/><rect x="608" y="228" width="21" height="40" fill="#fff" stroke="#000" stroke-width="1"/><text x="615" y="241" font-size="9" text-anchor="middle" fill="#000">-</text><text x="615" y="261" font-size="8" text-anchor="middle" fill="#000">+</text><text x="618" y="283" font-size="9" text-anchor="middle" fill="#000">Sum3</text><circle cx="429.5" cy="257" r="10" fill="#fff" stroke="#000" stroke-width="1"/><text x="429.5" y="261" font-size="10" text-anchor="middle" fill="#000">1</text><text x="429.5" y="279" font-size="9" text-anchor="middle" fill="#000">vert. (up) cmd</text><path d="M440 257 H600" fill="none" stroke="#000" stroke-width="1.2"/><path d="M600 253 L608 257 L600 261 Z" fill="#000"/><path d="M632 248 H899" fill="none" stroke="#000" stroke-width="1.2"/><path d="M900 244 L908 248 L900 252 Z" fill="#000"/><rect x="908.5" y="237" width="48" height="47" fill="#fff" stroke="#000" stroke-width="1"/><text x="932" y="249" font-size="9" text-anchor="middle" fill="#000">Switch</text><text x="932" y="261" font-size="9" text-anchor="middle" fill="#000">Number</text><text x="932" y="274" font-size="9" text-anchor="middle" fill="#000">1</text><text x="932" y="296" font-size="9" text-anchor="middle" fill="#000">Vert. Stab.</text><text x="932" y="308" font-size="9" text-anchor="middle" fill="#000">Loop Switch</text><circle cx="865" cy="296" r="10" fill="#fff" stroke="#000" stroke-width="1"/><text x="865" y="300" font-size="10" text-anchor="middle" fill="#000">3</text><text x="865" y="317" font-size="9" text-anchor="middle" fill="#000">Coll fb in</text><path d="M875 296 H880 V272 H899" fill="none" stroke="#000" stroke-width="1.2"/><path d="M900 268 L908 272 L900 276 Z" fill="#000"/><path d="M957 272 H971 V296 H977" fill="none" stroke="#000" stroke-width="1.2"/><path d="M977 292 L985 296 L977 300 Z" fill="#000"/><circle cx="995.5" cy="296" r="10" fill="#fff" stroke="#000" stroke-width="1"/><text x="995.5" y="300" font-size="10" text-anchor="middle" fill="#000">4</text><text x="995.5" y="317" font-size="9" text-anchor="middle" fill="#000">Coll fb out</text><path d="M957 248 H1020" fill="none" stroke="#000" stroke-width="1.2"/><path d="M1021 244 L1029 248 L1021 252 Z" fill="#000"/><rect x="1029" y="190" width="50" height="175" fill="#fff" stroke="#000" stroke-width="1"/><path d="M1040 234 L1053 255 L1040 277 Z M1029 255 H1040 M1053 255 H1058 V278" fill="none" stroke="#000" stroke-width="1.2"/><ellipse cx="1058" cy="299" rx="7" ry="21" fill="#fff" stroke="#000" stroke-width="1"/><path d="M1058 320 V342 H1029 M1065 299 H1079" fill="none" stroke="#000" stroke-width="1.2"/><path d="M1079 218 H1131 V360 M1079 272 H1127 V360 M1079 325 H1122 V360" fill="none" stroke="#000" stroke-width="1.2"/><path d="M1131 248 H1157" fill="none" stroke="#000" stroke-width="1.2"/><path d="M1157 244 L1165 248 L1157 252 Z" fill="#000"/><circle cx="1131" cy="248" r="1.5" fill="#000"/><path d="M1127 354 H1157" fill="none" stroke="#000" stroke-width="1.2"/><path d="M1157 350 L1165 354 L1157 358 Z" fill="#000"/><rect x="1165" y="194" width="53" height="175" fill="#fff" stroke="#000" stroke-width="1"/><path d="M1176 238 L1189 259 L1176 280 Z M1165 259 H1176 M1189 259 H1196 V281" fill="none" stroke="#000" stroke-width="1.2"/><ellipse cx="1196" cy="301" rx="8" ry="21" fill="#fff" stroke="#000" stroke-width="1"/><path d="M1196 322 V344 H1165" fill="none" stroke="#000" stroke-width="1.2"/><path d="M1218 228 H1239" fill="none" stroke="#000" stroke-width="1.2"/><path d="M1239 224 L1247 228 L1239 232 Z" fill="#000"/><path d="M1247 209.5 L1309 229.0 L1247 248.5 Z" fill="#fff" stroke="#000" stroke-width="1"/><text x="1262" y="233.0" font-size="10" text-anchor="start" fill="#000">-1</text><text x="1277" y="260" font-size="9" text-anchor="middle" fill="#000">hdot/w</text><path d="M1309 229 H1359" fill="none" stroke="#000" stroke-width="1.2"/><path d="M1359 225 L1367 229 L1359 233 Z" fill="#000"/><path d="M1331 170 V229 M1343.5 170 V229" fill="none" stroke="#000" stroke-width="1.2"/><circle cx="1331" cy="229" r="1.5" fill="#000"/><circle cx="1343.5" cy="229" r="1.5" fill="#000"/><rect x="1367.5" y="219" width="20" height="19" fill="#fff" stroke="#000" stroke-width="1"/><text x="1377.5" y="232" font-size="9" text-anchor="middle" fill="#000">1/s</text><text x="1377" y="250" font-size="9" text-anchor="middle" fill="#000">Integrator</text><path d="M1388 229 H1422" fill="none" stroke="#000" stroke-width="1.2"/><path d="M1422 225 L1430 229 L1422 233 Z" fill="#000"/><circle cx="1440" cy="228.5" r="10" fill="#fff" stroke="#000" stroke-width="1"/><text x="1440" y="232.5" font-size="10" text-anchor="middle" fill="#000">10</text><text x="1440" y="250" font-size="9" text-anchor="middle" fill="#000">h [ft]</text><text x="1440" y="181" font-size="9" text-anchor="middle" fill="#000">hdot [ft/sec]</text><path d="M1204 301 H1301" fill="none" stroke="#000" stroke-width="1.2"/><path d="M1301 297 L1309 301 L1301 305 Z" fill="#000"/><circle cx="1247" cy="301" r="1.5" fill="#000"/><path d="M1247 301 V360" fill="none" stroke="#000" stroke-width="1.2"/><path d="M1309.5 284.5 L1383 301 L1309.5 318 Z" fill="#fff" stroke="#000" stroke-width="1"/><path d="M1314 320 L1383 301" stroke="#000" stroke-width="4"/><text x="1320" y="304" font-size="10" text-anchor="start" fill="#000">57.3</text><text x="1345" y="333" font-size="9" text-anchor="middle" fill="#000">deg/rad_</text><path d="M1383 301 H1422" fill="none" stroke="#000" stroke-width="1.2"/><path d="M1422 297 L1430 301 L1422 305 Z" fill="#000"/><circle cx="1440" cy="300.5" r="10" fill="#fff" stroke="#000" stroke-width="1"/><text x="1440" y="304.5" font-size="10" text-anchor="middle" fill="#000">2</text><text x="1440" y="322" font-size="9" text-anchor="middle" fill="#000">thetadot [deg/sec]</text><circle cx="429.5" cy="344" r="10" fill="#fff" stroke="#000" stroke-width="1"/><text x="429.5" y="348" font-size="10" text-anchor="middle" fill="#000">2</text><path d="M440 344 H464" fill="none" stroke="#000" stroke-width="1.2"/><path d="M464 340 L472 344 L464 348 Z" fill="#000"/><path d="M472.5 326 L520 344 L472.5 362 Z" fill="#fff" stroke="#000" stroke-width="1"/><path d="M478 360 L520 345" stroke="#000" stroke-width="4"/><text x="475" y="348" font-size="9.5" text-anchor="start" fill="#000">1/57.3</text><path d="M520 344 H533" fill="none" stroke="#000" stroke-width="1.2"/><path d="M533 340 L541 344 L533 348 Z" fill="#000"/><rect x="544" y="340" width="20" height="30" fill="#000"/><rect x="541" y="337" width="20" height="30" fill="#fff" stroke="#000" stroke-width="1"/><text x="546" y="346" font-size="7" text-anchor="middle" fill="#000">+</text><path d="M564 354 H572" fill="none" stroke="#000" stroke-width="1.2"/><path d="M572 350 L580 354 L572 358 Z" fill="#000"/><path d="M579 336 L653 354 L579 372 Z" fill="#fff" stroke="#000" stroke-width="1"/><text x="581" y="357" font-size="9" text-anchor="start" fill="#000">dpp_kthet</text><path d="M655 354 H750" fill="none" stroke="#000" stroke-width="1.2"/><path d="M750 350 L758 354 L750 358 Z" fill="#000"/><path d="M661 354 V298 H678" fill="none" stroke="#000" stroke-width="1.2"/><path d="M678 294 L686 298 L678 302 Z" fill="#000"/><circle cx="661" cy="354" r="1.5" fill="#000"/><rect x="686" y="279" width="34.5" height="34.5" fill="#fff" stroke="#000" stroke-width="1"/><text x="703" y="292" font-size="9" text-anchor="middle" fill="#000">.5</text><path d="M697 297 H709" fill="none" stroke="#000" stroke-width="1"/><text x="703" y="310" font-size="9" text-anchor="middle" fill="#000">s</text><text x="703" y="325" font-size="9" text-anchor="middle" fill="#000">Integ. gain</text><path d="M720.5 297 H735 V335 H750" fill="none" stroke="#000" stroke-width="1.2"/><path d="M750 331 L758 335 L750 339 Z" fill="#000"/><rect x="761" y="328" width="20" height="45" fill="#000"/><rect x="758" y="325" width="20" height="45" fill="#fff" stroke="#000" stroke-width="1"/><text x="763" y="338" font-size="7" text-anchor="middle" fill="#000">+</text><text x="763" y="357" font-size="7" text-anchor="middle" fill="#000">+</text><path d="M781 347 H810" fill="none" stroke="#000" stroke-width="1.2"/><path d="M809 343 L817 347 L809 351 Z" fill="#000"/><rect x="820" y="340" width="18" height="30" fill="#000"/><rect x="817" y="337" width="18" height="30" fill="#fff" stroke="#000" stroke-width="1"/><text x="821" y="345" font-size="7" text-anchor="middle" fill="#000">+</text><path d="M838 354 H899" fill="none" stroke="#000" stroke-width="1.2"/><path d="M900 350 L908 354 L900 358 Z" fill="#000"/><rect x="908.5" y="342" width="48" height="30" fill="#fff" stroke="#000" stroke-width="1"/><text x="932" y="355" font-size="9" text-anchor="middle" fill="#000">Switch</text><path d="M957 354 H1020" fill="none" stroke="#000" stroke-width="1.2"/><path d="M1021 350 L1029 354 L1021 358 Z" fill="#000"/></g></svg><div style="position:absolute;left:384px;top:361px;width:1154px;height:430px;background:#d4d0c8;box-sizing:border-box;border-top:1px solid #d4d0c8;border-left:1px solid #d4d0c8;border-right:2px solid #787878;border-bottom:2px solid #8c8c8c;box-shadow:inset 1px 1px 0 #fff"></div><div style="position:absolute;left:389px;top:364px;width:1146px;height:16px;background:linear-gradient(to right,#808080,#c0c0c0)"></div><svg style="position:absolute;left:391px;top:365px" width="14" height="14" viewBox="0 0 16 16"><rect width="16" height="16" fill="#000"/><path d="M1 9 L6 7 L9 2 L12 8 L14 12 L11 10 L8 14 L6 11 Z" fill="#e06010"/><path d="M9 2 L12 8 L14 12 L11 10 Z" fill="#f8a020"/><path d="M1 9 L6 7 L5 10 Z" fill="#30b0d8"/></svg><div style="position:absolute;left:409px;top:366px;font-size:11px;line-height:13px;color:#d4d0c8;font-weight:bold;white-space:nowrap;letter-spacing:0px">rcdemoLab12</div><div style="position:absolute;left:1485px;top:366px;width:15px;height:13px;background:#d4d0c8;box-sizing:border-box;border-top:1px solid #f0eee8;border-left:1px solid #f0eee8;border-right:1px solid #404040;border-bottom:1px solid #404040;box-shadow:inset -1px -1px 0 #808080;"></div><div style="position:absolute;left:1489px;top:374px;width:6px;height:2px;background:#000"></div><div style="position:absolute;left:1501px;top:366px;width:15px;height:13px;background:#d4d0c8;box-sizing:border-box;border-top:1px solid #f0eee8;border-left:1px solid #f0eee8;border-right:1px solid #404040;border-bottom:1px solid #404040;box-shadow:inset -1px -1px 0 #808080;"></div><div style="position:absolute;left:1504px;top:368px;width:9px;height:8px;box-sizing:border-box;border:1px solid #000;border-top:2px solid #000"></div><div style="position:absolute;left:1518px;top:366px;width:15px;height:13px;background:#d4d0c8;box-sizing:border-box;border-top:1px solid #f0eee8;border-left:1px solid #f0eee8;border-right:1px solid #404040;border-bottom:1px solid #404040;box-shadow:inset -1px -1px 0 #808080;"></div><svg style="position:absolute;left:1521px;top:369px" width="9" height="8"><path d="M1 0.5 L8 7.5 M8 0.5 L1 7.5" stroke="#000" stroke-width="1.6"/></svg><div style="position:absolute;left:388px;top:381px;width:1131px;height:401px;background:#000"></div><div style="position:absolute;left:1519px;top:381px;width:16px;height:401px;background:#d4d0c8;box-sizing:border-box;border-right:2px solid #909090"></div><div style="position:absolute;left:1519px;top:381px;width:16px;height:16px;background:#d4d0c8;box-sizing:border-box;border-top:1px solid #f0eee8;border-left:1px solid #f0eee8;border-right:1px solid #404040;border-bottom:1px solid #404040;box-shadow:inset -1px -1px 0 #808080;"></div><svg style="position:absolute;left:1523px;top:386px" width="8" height="5"><path d="M0 4 L4 0 L8 4 Z" fill="#000"/></svg><div style="position:absolute;left:1519px;top:397px;width:16px;height:164px;background:#d8d5ce;box-sizing:border-box;border-top:1px solid #f0eee8;border-left:1px solid #f0eee8;border-right:1px solid #404040;border-bottom:1px solid #404040;box-shadow:inset -1px -1px 0 #808080;"></div><svg style="position:absolute;left:0;top:0;pointer-events:none" width="1538" height="1133"><defs><clipPath id="plclip"><rect x="388" y="381" width="1131" height="401"/></clipPath></defs><g clip-path="url(#plclip)" font-family="Liberation Sans, sans-serif"><rect x="469" y="417" width="178" height="169" fill="#ff0000"/><rect x="504" y="417" width="143" height="103" fill="#ff00ff"/><path d="M504 417 V520 H647" fill="none" stroke="#ffa040" stroke-width="1"/><rect x="522" y="417" width="125" height="85" fill="#0000ff"/><path d="M523 417 V502 H647" fill="none" stroke="#208080" stroke-width="2"/><text x="641" y="429" font-size="12.5" text-anchor="middle" fill="#a0a0ff" >H</text><path d="M526 447.8 L532 437.6 L538 447.8 Z" fill="#ffff00" stroke="#000" stroke-width="0.8"/><path d="M528 507.2 L534 517.4 L540 507.2 Z" fill="#00ff00" stroke="#000" stroke-width="0.8"/><text x="555" y="398" font-size="12" text-anchor="middle" fill="#e8e8e8" letter-spacing="-0.1">StbMgG1: Gain/Phase Margins</text><text x="555" y="408" font-size="12" text-anchor="middle" fill="#e8e8e8" letter-spacing="-0.1">(rigid-body freq. range)</text><text x="464" y="590.5" font-size="12" text-anchor="end" fill="#e8e8e8" >0</text><text x="464" y="552.55" font-size="12" text-anchor="end" fill="#e8e8e8" >20</text><text x="464" y="514.6" font-size="12" text-anchor="end" fill="#e8e8e8" >40</text><text x="464" y="476.65" font-size="12" text-anchor="end" fill="#e8e8e8" >60</text><text x="464" y="438.7" font-size="12" text-anchor="end" fill="#e8e8e8" >80</text><text x="469.0" y="602" font-size="12" text-anchor="middle" fill="#e8e8e8" >0</text><text x="513.5" y="602" font-size="12" text-anchor="middle" fill="#e8e8e8" >5</text><text x="558.0" y="602" font-size="12" text-anchor="middle" fill="#e8e8e8" >10</text><text x="602.5" y="602" font-size="12" text-anchor="middle" fill="#e8e8e8" >15</text><text x="647.0" y="602" font-size="12" text-anchor="middle" fill="#e8e8e8" >20</text><text x="555" y="617" font-size="12" text-anchor="middle" fill="#e8e8e8" >GM [db]</text><text x="441" y="503" font-size="12" text-anchor="middle" fill="#e8e8e8" transform="rotate(-90 441 503)" >PM [deg]</text><rect x="743.5" y="417" width="178.5" height="169" fill="#ff0000"/><path d="M763 586 V522 Q766 500 776 489 L849 417 H922 V586 Z" fill="#ff00ff"/><path d="M763 586 V522 Q766 500 776 489 L849 417" fill="none" stroke="#ffa040" stroke-width="1"/><path d="M815 586 V522 Q818 500 832 486 L903 417 H922 V586 Z" fill="#0000ff"/><path d="M817 586 V522 Q820 501 834 487 L906 417" fill="none" stroke="#208080" stroke-width="1.8"/><rect x="743.5" y="417" width="0.1" height="0.1" fill="#ff0000"/><text x="918" y="429" font-size="12.5" text-anchor="middle" fill="#a0a0ff" >S</text><path d="M830 542.2 L836 552.4 L842 542.2 Z" fill="#00ff00" stroke="#000" stroke-width="0.8"/><text x="830" y="398" font-size="12" text-anchor="middle" fill="#e8e8e8" letter-spacing="-0.1">BnwAtH1:Bandwidth&#160;&#160;(pitch &amp; roll)</text><text x="830" y="408" font-size="12" text-anchor="middle" fill="#e8e8e8" letter-spacing="-0.1">Other MTEs;UCE&gt;1; Div Att</text><text x="738" y="590.5" font-size="12" text-anchor="end" fill="#e8e8e8" >0</text><text x="738" y="548.2" font-size="12" text-anchor="end" fill="#e8e8e8" >0.1</text><text x="738" y="505.9" font-size="12" text-anchor="end" fill="#e8e8e8" >0.2</text><text x="738" y="463.6" font-size="12" text-anchor="end" fill="#e8e8e8" >0.3</text><text x="738" y="421.3" font-size="12" text-anchor="end" fill="#e8e8e8" >0.4</text><text x="743.5" y="602" font-size="12" text-anchor="middle" fill="#e8e8e8" >0</text><text x="779.2" y="602" font-size="12" text-anchor="middle" fill="#e8e8e8" >1</text><text x="814.9" y="602" font-size="12" text-anchor="middle" fill="#e8e8e8" >2</text><text x="850.6" y="602" font-size="12" text-anchor="middle" fill="#e8e8e8" >3</text><text x="886.3" y="602" font-size="12" text-anchor="middle" fill="#e8e8e8" >4</text><text x="922.0" y="602" font-size="12" text-anchor="middle" fill="#e8e8e8" >5</text><text x="830" y="617" font-size="12" text-anchor="middle" fill="#e8e8e8" >Bandwidth [rad/sec]</text><text x="713" y="505" font-size="12" text-anchor="middle" fill="#e8e8e8" transform="rotate(-90 713 505)" >Phase delay [sec]</text><rect x="1019.5" y="417" width="178.5" height="169" fill="#0000ff"/><path d="M1019.5 526 H1050 C1080 543, 1110 552, 1150 558 L1198 564 V586 H1019.5 Z" fill="#ff00ff"/><path d="M1019.5 526 H1050 C1080 543, 1110 552, 1150 558 L1198 564" fill="none" stroke="#ffa040" stroke-width="0.8"/><path d="M1019.5 521 H1050 C1080 539, 1110 549, 1150 555 L1198 561" fill="none" stroke="#208080" stroke-width="2"/><rect x="1019.5" y="581" width="178.5" height="5" fill="#ff0000"/><text x="1194" y="429" font-size="12.5" text-anchor="middle" fill="#a0a0ff" >S</text><path d="M1043 519.8 L1049 509.6 L1055 519.8 Z" fill="#ffff00" stroke="#000" stroke-width="0.8"/><path d="M1105.5 513.2 L1111.5 523.4 L1117.5 513.2 Z" fill="#00ff00" stroke="#000" stroke-width="0.8"/><path d="M1174.5 521 L1181 527.5 L1174.5 534 L1168 527.5 Z" fill="#e0e0e0" stroke="#000" stroke-width="0.6"/><text x="1019" y="592" font-size="11.5" text-anchor="start" fill="#e8e8e8" >ADS-33D</text><text x="1105" y="398" font-size="12" text-anchor="middle" fill="#e8e8e8" letter-spacing="-0.1">QikPiH2:Quickness</text><text x="1105" y="408" font-size="12" text-anchor="middle" fill="#e8e8e8" letter-spacing="-0.1">Other MTEs (Pitch)</text><text x="1014" y="590.5" font-size="12" text-anchor="end" fill="#e8e8e8" >0</text><text x="1014" y="548.2" font-size="12" text-anchor="end" fill="#e8e8e8" >0.5</text><text x="1014" y="505.9" font-size="12" text-anchor="end" fill="#e8e8e8" >1</text><text x="1014" y="463.6" font-size="12" text-anchor="end" fill="#e8e8e8" >1.5</text><text x="1014" y="421.3" font-size="12" text-anchor="end" fill="#e8e8e8" >2</text><text x="1019.5" y="602" font-size="12" text-anchor="middle" fill="#e8e8e8" >0</text><text x="1079.0" y="602" font-size="12" text-anchor="middle" fill="#e8e8e8" >10</text><text x="1138.5" y="602" font-size="12" text-anchor="middle" fill="#e8e8e8" >20</text><text x="1198.0" y="602" font-size="12" text-anchor="middle" fill="#e8e8e8" >30</text><text x="1105" y="617" font-size="12" text-anchor="middle" fill="#e8e8e8" >(d-theta)min&#160;&#160;[deg]</text><text x="989" y="504" font-size="12" text-anchor="middle" fill="#e8e8e8" transform="rotate(-90 989 504)" >q-pk / (d-Theta)pk&#160;&#160;[1/sec]</text><rect x="1294" y="417" width="178" height="169" fill="#ff0000"/><rect x="1294" y="518" width="71" height="68" fill="#ff00ff"/><path d="M1294 518 H1365 V586" fill="none" stroke="#ffa040" stroke-width="1"/><rect x="1294" y="536" width="52" height="50" fill="#0000ff"/><path d="M1294 536 H1346 V586" fill="none" stroke="#a0c040" stroke-width="1.5"/><path d="M1293.5 580.2 L1297 586.15 L1300.5 580.2 Z" fill="#00ff00" stroke="#000" stroke-width="0.8"/><text x="1468" y="429" font-size="12.5" text-anchor="middle" fill="#ffc0c0" >S</text><text x="1381" y="398" font-size="12" text-anchor="middle" fill="#e8e8e8" letter-spacing="-0.1">SatAcG1:</text><text x="1381" y="408" font-size="12" text-anchor="middle" fill="#e8e8e8" letter-spacing="-0.1">Actuator Saturation</text><text x="1289" y="590.5" font-size="12" text-anchor="end" fill="#e8e8e8" >0</text><text x="1289" y="556.7" font-size="12" text-anchor="end" fill="#e8e8e8" >0.2</text><text x="1289" y="522.9" font-size="12" text-anchor="end" fill="#e8e8e8" >0.4</text><text x="1289" y="489.1" font-size="12" text-anchor="end" fill="#e8e8e8" >0.6</text><text x="1289" y="455.3" font-size="12" text-anchor="end" fill="#e8e8e8" >0.8</text><text x="1289" y="421.5" font-size="12" text-anchor="end" fill="#e8e8e8" >1</text><text x="1294" y="602" font-size="12" text-anchor="middle" fill="#e8e8e8" >0</text><text x="1383" y="602" font-size="12" text-anchor="middle" fill="#e8e8e8" >0.5</text><text x="1472" y="602" font-size="12" text-anchor="middle" fill="#e8e8e8" >1</text><text x="1381" y="617" font-size="12" text-anchor="middle" fill="#e8e8e8" >Actuator Rate Saturation</text><text x="1264" y="503" font-size="12" text-anchor="middle" fill="#e8e8e8" transform="rotate(-90 1264 503)" >Actuator Position Saturation</text><rect x="469" y="675" width="178" height="107" fill="#ff0000"/><rect x="504" y="742.5" width="143" height="39.5" fill="#ff00ff"/><path d="M504 782 V742.5 H647" fill="none" stroke="#ffa040" stroke-width="1"/><rect x="576.5" y="776.5" width="70.5" height="6" fill="#0000ff"/><path d="M577 782 V776.5 H647" fill="none" stroke="#ffa040" stroke-width="1"/><path d="M579 782 V779 H647" fill="none" stroke="#208080" stroke-width="1.5"/><text x="642" y="687" font-size="12.5" text-anchor="middle" fill="#ffc0c0" >S</text><text x="555" y="656" font-size="12" text-anchor="middle" fill="#e8e8e8" letter-spacing="-0.1">FrqHeH2:Heave response</text><text x="555" y="666" font-size="12" text-anchor="middle" fill="#e8e8e8" letter-spacing="-0.1">shipboard landing</text><text x="464" y="679.5" font-size="12" text-anchor="end" fill="#e8e8e8" >0.5</text><text x="464" y="713.1" font-size="12" text-anchor="end" fill="#e8e8e8" >0.4</text><text x="464" y="746.7" font-size="12" text-anchor="end" fill="#e8e8e8" >0.3</text><text x="464" y="780.3" font-size="12" text-anchor="end" fill="#e8e8e8" >0.2</text><text x="441" y="695" font-size="12" text-anchor="end" fill="#e8e8e8" transform="rotate(-90 441 695)" >ay, tau_hdot, sec</text><rect x="743.5" y="675" width="88.5" height="107" fill="#0000ff"/><rect x="826.5" y="675" width="2" height="107" fill="#208080"/><rect x="832" y="675" width="45" height="107" fill="#ff00ff"/><rect x="877" y="675" width="45" height="107" fill="#ff0000"/><rect x="876.5" y="675" width="1.5" height="107" fill="#ffa040"/><text x="918" y="687" font-size="12.5" text-anchor="middle" fill="#ffc0c0" >J</text><path d="M800 764.8 L806 754.6 L812 764.8 Z" fill="#ffff00" stroke="#000" stroke-width="0.8"/><path d="M798 752.2 L804 762.4 L810 752.2 Z" fill="#00ff00" stroke="#000" stroke-width="0.8"/><text x="830" y="656" font-size="12" text-anchor="middle" fill="#e8e8e8" letter-spacing="-0.1">CrsLnG1:Crossover Freq.</text><text x="830" y="666" font-size="12" text-anchor="middle" fill="#e8e8e8" letter-spacing="-0.1">(linear scale)</text><rect x="1019.5" y="675" width="62" height="107" fill="#ff00ff"/><rect x="1019.5" y="675" width="1.5" height="107" fill="#ffa040"/><rect x="1081.5" y="675" width="1.5" height="107" fill="#ffa040"/><rect x="1083" y="675" width="4" height="107" fill="#208080"/><rect x="1087" y="675" width="111" height="107" fill="#0000ff"/><text x="1194" y="687" font-size="12.5" text-anchor="middle" fill="#a0a0ff" >S</text><path d="M1106.5 753.2 L1112.5 763.4 L1118.5 753.2 Z" fill="#00ff00" stroke="#000" stroke-width="0.8"/><text x="1105" y="656" font-size="12" text-anchor="middle" fill="#e8e8e8" letter-spacing="-0.1">OvsAtH1:Attitude Resp. Damp. Ratio</text><text x="1105" y="666" font-size="12" text-anchor="middle" fill="#e8e8e8" letter-spacing="-0.1">(from peak overshoot)</text><rect x="1294" y="675" width="88" height="107" fill="#0000ff"/><rect x="1382" y="675" width="90" height="107" fill="#ff0000"/><rect x="1381.5" y="675" width="1.5" height="107" fill="#ffa040"/><text x="1467" y="687" font-size="12.5" text-anchor="middle" fill="#ffc0c0" >H</text><path d="M1376 764.8 L1382 754.6 L1388 764.8 Z" fill="#ffff00" stroke="#000" stroke-width="0.8"/><text x="1381" y="656" font-size="12" text-anchor="middle" fill="#e8e8e8" letter-spacing="-0.1">EigLcG1:</text><text x="1381" y="666" font-size="12" text-anchor="middle" fill="#e8e8e8" letter-spacing="-0.1">Eigenvalues (All)</text></g></svg><div style="position:absolute;left:0px;top:783px;width:806px;height:350px;background:#d4d0c8;box-sizing:border-box;border-top:1px solid #d4d0c8;border-left:1px solid #d4d0c8;border-right:2px solid #787878;border-bottom:2px solid #8c8c8c;box-shadow:inset 1px 1px 0 #fff"></div><div style="position:absolute;left:4px;top:786px;width:797px;height:16px;background:linear-gradient(to right,#808080,#c0c0c0)"></div><svg style="position:absolute;left:6px;top:787px" width="14" height="14" viewBox="0 0 16 16"><rect width="16" height="16" fill="#000"/><path d="M1 9 L6 7 L9 2 L12 8 L14 12 L11 10 L8 14 L6 11 Z" fill="#e06010"/><path d="M9 2 L12 8 L14 12 L11 10 Z" fill="#f8a020"/><path d="M1 9 L6 7 L5 10 Z" fill="#30b0d8"/></svg><div style="position:absolute;left:24px;top:788px;font-size:11px;line-height:13px;color:#d4d0c8;font-weight:bold;white-space:nowrap;letter-spacing:0.12px">QikPiH2 (QikPiH2 1): Input Signal1 Theta Response3 and q Response2</div><div style="position:absolute;left:751px;top:788px;width:15px;height:13px;background:#d4d0c8;box-sizing:border-box;border-top:1px solid #f0eee8;border-left:1px solid #f0eee8;border-right:1px solid #404040;border-bottom:1px solid #404040;box-shadow:inset -1px -1px 0 #808080;"></div><div style="position:absolute;left:755px;top:796px;width:6px;height:2px;background:#000"></div><div style="position:absolute;left:767px;top:788px;width:15px;height:13px;background:#d4d0c8;box-sizing:border-box;border-top:1px solid #f0eee8;border-left:1px solid #f0eee8;border-right:1px solid #404040;border-bottom:1px solid #404040;box-shadow:inset -1px -1px 0 #808080;"></div><div style="position:absolute;left:770px;top:790px;width:9px;height:8px;box-sizing:border-box;border:1px solid #000;border-top:2px solid #000"></div><div style="position:absolute;left:784px;top:788px;width:15px;height:13px;background:#d4d0c8;box-sizing:border-box;border-top:1px solid #f0eee8;border-left:1px solid #f0eee8;border-right:1px solid #404040;border-bottom:1px solid #404040;box-shadow:inset -1px -1px 0 #808080;"></div><svg style="position:absolute;left:787px;top:791px" width="9" height="8"><path d="M1 0.5 L8 7.5 M8 0.5 L1 7.5" stroke="#000" stroke-width="1.6"/></svg><div style="position:absolute;left:3px;top:803px;width:800px;height:328px;background:#cccccc"></div><div style="position:absolute;left:805px;top:783px;width:733px;height:350px;background:#d4d0c8;box-sizing:border-box;border-top:1px solid #d4d0c8;border-left:1px solid #d4d0c8;border-right:2px solid #787878;border-bottom:2px solid #8c8c8c;box-shadow:inset 1px 1px 0 #fff"></div><div style="position:absolute;left:809px;top:787px;width:726px;height:17px;background:linear-gradient(to right,#0a246a,#a6caf0)"></div><svg style="position:absolute;left:811px;top:788px" width="15" height="15" viewBox="0 0 16 16"><rect width="16" height="16" fill="#000"/><path d="M1 9 L6 7 L9 2 L12 8 L14 12 L11 10 L8 14 L6 11 Z" fill="#e06010"/><path d="M9 2 L12 8 L14 12 L11 10 Z" fill="#f8a020"/><path d="M1 9 L6 7 L5 10 Z" fill="#30b0d8"/></svg><div style="position:absolute;left:829px;top:789px;font-size:11px;line-height:14px;color:#fff;font-weight:bold;white-space:nowrap;letter-spacing:0.2px">BnwAtH1 (BnwAtH1 1): Input2: pitch att cmd nose up pos.&#160;&#160; Output3: theta [deg]</div><div style="position:absolute;left:1485px;top:789px;width:15px;height:13px;background:#d4d0c8;box-sizing:border-box;border-top:1px solid #f0eee8;border-left:1px solid #f0eee8;border-right:1px solid #404040;border-bottom:1px solid #404040;box-shadow:inset -1px -1px 0 #808080;"></div><div style="position:absolute;left:1489px;top:797px;width:6px;height:2px;background:#000"></div><div style="position:absolute;left:1501px;top:789px;width:15px;height:13px;background:#d4d0c8;box-sizing:border-box;border-top:1px solid #f0eee8;border-left:1px solid #f0eee8;border-right:1px solid #404040;border-bottom:1px solid #404040;box-shadow:inset -1px -1px 0 #808080;"></div><div style="position:absolute;left:1504px;top:791px;width:9px;height:8px;box-sizing:border-box;border:1px solid #000;border-top:2px solid #000"></div><div style="position:absolute;left:1518px;top:789px;width:15px;height:13px;background:#d4d0c8;box-sizing:border-box;border-top:1px solid #f0eee8;border-left:1px solid #f0eee8;border-right:1px solid #404040;border-bottom:1px solid #404040;box-shadow:inset -1px -1px 0 #808080;"></div><svg style="position:absolute;left:1521px;top:792px" width="9" height="8"><path d="M1 0.5 L8 7.5 M8 0.5 L1 7.5" stroke="#000" stroke-width="1.6"/></svg><div style="position:absolute;left:808px;top:804px;width:727px;height:327px;background:#cccccc"></div><svg style="position:absolute;left:0;top:0;pointer-events:none" width="1538" height="1133"><g font-family="Liberation Sans, sans-serif"><rect x="43.5" y="837.5" width="191.5" height="253.5" fill="#fff"/><path d="M107.3 837.5 V1091" stroke="#000" stroke-width="1.2" stroke-dasharray="2 2.5"/><path d="M171.2 837.5 V1091" stroke="#000" stroke-width="1.2" stroke-dasharray="2 2.5"/><path d="M43.5 1040.3 H235" stroke="#000" stroke-width="1.2" stroke-dasharray="2 2.5"/><path d="M43.5 989.6 H235" stroke="#000" stroke-width="1.2" stroke-dasharray="2 2.5"/><path d="M43.5 938.9 H235" stroke="#000" stroke-width="1.2" stroke-dasharray="2 2.5"/><path d="M43.5 888.2 H235" stroke="#000" stroke-width="1.2" stroke-dasharray="2 2.5"/><text x="43.5" y="1107" font-size="12" text-anchor="middle" fill="#000" >0</text><text x="107.33333333333334" y="1107" font-size="12" text-anchor="middle" fill="#000" >2</text><text x="171.16666666666669" y="1107" font-size="12" text-anchor="middle" fill="#000" >4</text><text x="235.0" y="1107" font-size="12" text-anchor="middle" fill="#000" >6</text><text x="40.5" y="1095.5" font-size="12" text-anchor="end" fill="#000" >0</text><text x="40.5" y="1044.8" font-size="12" text-anchor="end" fill="#000" >1</text><text x="40.5" y="994.1" font-size="12" text-anchor="end" fill="#000" >2</text><text x="40.5" y="943.4" font-size="12" text-anchor="end" fill="#000" >3</text><text x="40.5" y="892.7" font-size="12" text-anchor="end" fill="#000" >4</text><text x="40.5" y="842.0" font-size="12" text-anchor="end" fill="#000" >5</text><rect x="43.5" y="837.5" width="191.5" height="253.5" fill="none" stroke="#404040" stroke-width="1.2"/><path d="M47 1091 V838.0 H235" fill="none" stroke="#6060ff" stroke-width="1.6"/><text x="139" y="827" font-size="12.5" text-anchor="middle" fill="#000" >Input Signal</text><text x="139" y="1122" font-size="12.5" text-anchor="middle" fill="#000" >time [sec]</text><rect x="276" y="837.5" width="192" height="253.5" fill="#fff"/><path d="M340.0 837.5 V1091" stroke="#000" stroke-width="1.2" stroke-dasharray="2 2.5"/><path d="M404.0 837.5 V1091" stroke="#000" stroke-width="1.2" stroke-dasharray="2 2.5"/><path d="M276 1054.8 H468" stroke="#000" stroke-width="1.2" stroke-dasharray="2 2.5"/><path d="M276 1018.6 H468" stroke="#000" stroke-width="1.2" stroke-dasharray="2 2.5"/><path d="M276 982.4 H468" stroke="#000" stroke-width="1.2" stroke-dasharray="2 2.5"/><path d="M276 946.1 H468" stroke="#000" stroke-width="1.2" stroke-dasharray="2 2.5"/><path d="M276 909.9 H468" stroke="#000" stroke-width="1.2" stroke-dasharray="2 2.5"/><path d="M276 873.7 H468" stroke="#000" stroke-width="1.2" stroke-dasharray="2 2.5"/><text x="276.0" y="1107" font-size="12" text-anchor="middle" fill="#000" >0</text><text x="340.0" y="1107" font-size="12" text-anchor="middle" fill="#000" >2</text><text x="404.0" y="1107" font-size="12" text-anchor="middle" fill="#000" >4</text><text x="468.0" y="1107" font-size="12" text-anchor="middle" fill="#000" >6</text><text x="273" y="1095.5" font-size="12" text-anchor="end" fill="#000" >0</text><text x="273" y="1059.2857142857142" font-size="12" text-anchor="end" fill="#000" >1</text><text x="273" y="1023.0714285714286" font-size="12" text-anchor="end" fill="#000" >2</text><text x="273" y="986.8571428571429" font-size="12" text-anchor="end" fill="#000" >3</text><text x="273" y="950.6428571428571" font-size="12" text-anchor="end" fill="#000" >4</text><text x="273" y="914.4285714285714" font-size="12" text-anchor="end" fill="#000" >5</text><text x="273" y="878.2142857142858" font-size="12" text-anchor="end" fill="#000" >6</text><text x="273" y="842.0" font-size="12" text-anchor="end" fill="#000" >7</text><path d="M276.0 1091.0 C276.7 1090.7 279.0 1092.2 280.5 1089.2 C282.0 1086.2 283.8 1078.0 285.0 1072.9 C286.1 1067.8 285.3 1068.7 287.2 1058.4 C289.1 1048.1 292.7 1024.6 296.2 1011.3 C299.6 998.0 304.1 989.6 308.0 978.7 C311.9 967.9 314.9 957.6 319.8 946.1 C324.7 934.7 331.1 919.9 337.4 909.9 C343.8 900.0 351.6 892.3 357.9 886.4 C364.2 880.5 370.2 876.8 375.2 874.4 C380.2 872.1 383.2 872.0 388.0 872.3 C392.8 872.6 396.5 873.4 404.0 876.2 C411.5 879.1 422.1 884.9 432.8 889.6 C443.5 894.4 462.1 902.0 468.0 904.5" fill="none" stroke="#ff3030" stroke-width="1.3"/><path d="M383.0 872.2657142857142 L393.0 872.2657142857142 M388.0 867.2657142857142 L388.0 877.2657142857142" stroke="#00e000" stroke-width="1.4"/><path d="M385.5 869.7657142857142 L390.5 874.7657142857142 M390.5 869.7657142857142 L385.5 874.7657142857142" stroke="#00e000" stroke-width="1"/><path d="M463 904.4964285714286 L473 904.4964285714286 M468 899.4964285714286 L468 909.4964285714286" stroke="#0000ff" stroke-width="1.4"/><path d="M465.5 901.9964285714286 L470.5 906.9964285714286 M470.5 901.9964285714286 L465.5 906.9964285714286" stroke="#0000ff" stroke-width="1"/><rect x="319" y="1044" width="164" height="40" fill="#fff" stroke="#000" stroke-width="1"/><path d="M341 1055 L349 1055 M345 1051 L345 1059" stroke="#00e000" stroke-width="1.4"/><path d="M342.5 1052.5 L347.5 1057.5 M347.5 1052.5 L342.5 1057.5" stroke="#00e000" stroke-width="1"/><path d="M341 1074 L349 1074 M345 1070 L345 1078" stroke="#0000ff" stroke-width="1.4"/><path d="M342.5 1071.5 L347.5 1076.5 M347.5 1071.5 L342.5 1076.5" stroke="#0000ff" stroke-width="1"/><text x="368" y="1059.5" font-size="12" text-anchor="start" fill="#000" >(dtheta)pk=6.0389</text><text x="368" y="1078.5" font-size="12" text-anchor="start" fill="#000" >(dtheta)min=5.1464</text><rect x="276" y="837.5" width="192" height="253.5" fill="none" stroke="#404040" stroke-width="1.2"/><text x="371" y="827" font-size="12.5" text-anchor="middle" fill="#000" >Theta Response</text><text x="371" y="1122" font-size="12.5" text-anchor="middle" fill="#000" >time [sec]</text><text x="256" y="964" font-size="12.5" text-anchor="middle" fill="#000" transform="rotate(-90 256 964)" >Theta [deg]</text><rect x="507" y="837.5" width="192" height="253.5" fill="#fff"/><path d="M571.0 837.5 V1091" stroke="#000" stroke-width="1.2" stroke-dasharray="2 2.5"/><path d="M635.0 837.5 V1091" stroke="#000" stroke-width="1.2" stroke-dasharray="2 2.5"/><path d="M507 1054.8 H699" stroke="#000" stroke-width="1.2" stroke-dasharray="2 2.5"/><path d="M507 1018.6 H699" stroke="#000" stroke-width="1.2" stroke-dasharray="2 2.5"/><path d="M507 982.4 H699" stroke="#000" stroke-width="1.2" stroke-dasharray="2 2.5"/><path d="M507 946.1 H699" stroke="#000" stroke-width="1.2" stroke-dasharray="2 2.5"/><path d="M507 909.9 H699" stroke="#000" stroke-width="1.2" stroke-dasharray="2 2.5"/><path d="M507 873.7 H699" stroke="#000" stroke-width="1.2" stroke-dasharray="2 2.5"/><text x="507.0" y="1107" font-size="12" text-anchor="middle" fill="#000" >0</text><text x="571.0" y="1107" font-size="12" text-anchor="middle" fill="#000" >2</text><text x="635.0" y="1107" font-size="12" text-anchor="middle" fill="#000" >4</text><text x="699.0" y="1107" font-size="12" text-anchor="middle" fill="#000" >6</text><text x="504" y="1095.5" font-size="12" text-anchor="end" fill="#000" >-1</text><text x="504" y="1059.2857142857142" font-size="12" text-anchor="end" fill="#000" >0</text><text x="504" y="1023.0714285714286" font-size="12" text-anchor="end" fill="#000" >1</text><text x="504" y="986.8571428571429" font-size="12" text-anchor="end" fill="#000" >2</text><text x="504" y="950.6428571428571" font-size="12" text-anchor="end" fill="#000" >3</text><text x="504" y="914.4285714285714" font-size="12" text-anchor="end" fill="#000" >4</text><text x="504" y="878.2142857142858" font-size="12" text-anchor="end" fill="#000" >5</text><text x="504" y="842.0" font-size="12" text-anchor="end" fill="#000" >6</text><path d="M507.0 1054.8 C507.6 1050.6 509.5 1047.2 510.8 1029.4 C512.2 1011.6 513.8 973.3 515.3 948.0 C516.8 922.6 518.8 890.3 519.8 877.3 C520.8 864.4 520.7 868.9 521.4 870.1 C522.1 871.3 522.8 874.0 524.0 884.6 C525.1 895.1 527.0 920.2 528.4 933.5 C529.9 946.7 530.3 961.2 532.6 964.2 C534.9 967.3 538.7 949.2 542.2 951.6 C545.7 954.0 549.1 971.2 553.4 978.7 C557.7 986.3 563.0 990.2 567.8 996.8 C572.6 1003.5 576.4 1011.0 582.2 1018.6 C588.0 1026.1 596.5 1036.3 602.4 1042.1 C608.2 1048.0 612.0 1050.1 617.4 1053.7 C622.8 1057.3 627.5 1061.1 635.0 1063.8 C642.5 1066.6 651.5 1069.5 662.2 1070.4 C672.9 1071.3 692.9 1069.5 699.0 1069.3" fill="none" stroke="#40ff40" stroke-width="1.4"/><path d="M515.44 868.2821428571428 L525.44 868.2821428571428 M520.44 863.2821428571428 L520.44 873.2821428571428" stroke="#ff0000" stroke-width="1.4"/><path d="M517.94 865.7821428571428 L522.94 870.7821428571428 M522.94 865.7821428571428 L517.94 870.7821428571428" stroke="#ff0000" stroke-width="1"/><rect x="566" y="844" width="130" height="22" fill="#fff" stroke="#000" stroke-width="1"/><path d="M589 855 L597 855 M593 851 L593 859" stroke="#ff0000" stroke-width="1.4"/><path d="M590.5 852.5 L595.5 857.5 M595.5 852.5 L590.5 857.5" stroke="#ff0000" stroke-width="1"/><text x="616" y="859.5" font-size="12" text-anchor="start" fill="#000" >(q)pk=5.1459</text><rect x="507" y="837.5" width="192" height="253.5" fill="none" stroke="#404040" stroke-width="1.2"/><text x="603" y="827" font-size="12.5" text-anchor="middle" fill="#000" >q Response</text><text x="603" y="1122" font-size="12.5" text-anchor="middle" fill="#000" >time [sec]</text><text x="482" y="964" font-size="12.5" text-anchor="middle" fill="#000" transform="rotate(-90 482 964)" >q [deg/sec]</text><text x="701" y="866.0" font-size="12" text-anchor="start" fill="#000" >(dtheta)min=</text><text x="701" y="891.5" font-size="12" text-anchor="start" fill="#000" >5.1464</text><text x="701" y="917.0" font-size="12" text-anchor="start" fill="#000" >(q)pk/(dtheta)pk=</text><text x="701" y="942.5" font-size="12" text-anchor="start" fill="#000" >0.85212</text><rect x="882.3" y="837.7" width="363.4000000000001" height="96.89999999999998" fill="#fff"/><path d="M922.8 837.7 V934.6" stroke="#000" stroke-width="1.2" stroke-dasharray="2 2.5"/><path d="M946.5 837.7 V934.6" stroke="#000" stroke-width="1.2" stroke-dasharray="2 2.5"/><path d="M963.3 837.7 V934.6" stroke="#000" stroke-width="1.2" stroke-dasharray="2 2.5"/><path d="M976.4 837.7 V934.6" stroke="#000" stroke-width="1.2" stroke-dasharray="2 2.5"/><path d="M987.0 837.7 V934.6" stroke="#000" stroke-width="1.2" stroke-dasharray="2 2.5"/><path d="M996.1 837.7 V934.6" stroke="#000" stroke-width="1.2" stroke-dasharray="2 2.5"/><path d="M1003.9 837.7 V934.6" stroke="#000" stroke-width="1.2" stroke-dasharray="2 2.5"/><path d="M1010.7 837.7 V934.6" stroke="#000" stroke-width="1.2" stroke-dasharray="2 2.5"/><path d="M1016.9 837.7 V934.6" stroke="#000" stroke-width="1.2" stroke-dasharray="2 2.5"/><path d="M1057.4 837.7 V934.6" stroke="#000" stroke-width="1.2" stroke-dasharray="2 2.5"/><path d="M1081.1 837.7 V934.6" stroke="#000" stroke-width="1.2" stroke-dasharray="2 2.5"/><path d="M1097.9 837.7 V934.6" stroke="#000" stroke-width="1.2" stroke-dasharray="2 2.5"/><path d="M1111.0 837.7 V934.6" stroke="#000" stroke-width="1.2" stroke-dasharray="2 2.5"/><path d="M1121.6 837.7 V934.6" stroke="#000" stroke-width="1.2" stroke-dasharray="2 2.5"/><path d="M1130.7 837.7 V934.6" stroke="#000" stroke-width="1.2" stroke-dasharray="2 2.5"/><path d="M1138.5 837.7 V934.6" stroke="#000" stroke-width="1.2" stroke-dasharray="2 2.5"/><path d="M1145.3 837.7 V934.6" stroke="#000" stroke-width="1.2" stroke-dasharray="2 2.5"/><path d="M1151.5 837.7 V934.6" stroke="#000" stroke-width="1.2" stroke-dasharray="2 2.5"/><path d="M1192.0 837.7 V934.6" stroke="#000" stroke-width="1.2" stroke-dasharray="2 2.5"/><path d="M1215.7 837.7 V934.6" stroke="#000" stroke-width="1.2" stroke-dasharray="2 2.5"/><path d="M1232.5 837.7 V934.6" stroke="#000" stroke-width="1.2" stroke-dasharray="2 2.5"/><path d="M882.3 915.2 H1245.7" stroke="#000" stroke-width="1.2" stroke-dasharray="2 2.5"/><path d="M882.3 895.8 H1245.7" stroke="#000" stroke-width="1.2" stroke-dasharray="2 2.5"/><path d="M882.3 876.5 H1245.7" stroke="#000" stroke-width="1.2" stroke-dasharray="2 2.5"/><path d="M882.3 857.1 H1245.7" stroke="#000" stroke-width="1.2" stroke-dasharray="2 2.5"/><text x="879.3" y="939.1" font-size="12" text-anchor="end" fill="#000" >-80</text><text x="879.3" y="919.72" font-size="12" text-anchor="end" fill="#000" >-60</text><text x="879.3" y="900.34" font-size="12" text-anchor="end" fill="#000" >-40</text><text x="879.3" y="880.96" font-size="12" text-anchor="end" fill="#000" >-20</text><text x="879.3" y="861.58" font-size="12" text-anchor="end" fill="#000" >0</text><text x="879.3" y="842.2" font-size="12" text-anchor="end" fill="#000" >20</text><path d="M882.3 857.2 C887.5 857.2 903.0 857.6 913.7 857.2 C924.4 856.8 930.6 854.9 946.6 854.8 C962.5 854.6 996.9 855.7 1009.4 856.3 C1021.9 856.9 1010.7 856.6 1021.4 858.4 C1032.0 860.1 1060.1 864.9 1073.1 866.7 C1086.1 868.6 1087.7 868.8 1099.1 869.7 C1110.5 870.6 1132.6 871.1 1141.6 872.1 C1150.6 873.1 1145.1 872.1 1153.0 875.7 C1160.9 879.3 1173.4 886.2 1188.9 893.7 C1204.3 901.1 1236.2 916.1 1245.7 920.6" fill="none" stroke="#4060ff" stroke-width="1.3"/><path d="M1068.5 866.7 L1077.5 866.7 M1073 862.2 L1073 871.2" stroke="#00e000" stroke-width="1.4"/><path d="M1070.5 864.2 L1075.5 869.2 M1075.5 864.2 L1070.5 869.2" stroke="#00e000" stroke-width="1"/><path d="M1137.5 872 L1146.5 872 M1142 867.5 L1142 876.5" stroke="#20a0ff" stroke-width="1.4"/><path d="M1139.5 869.5 L1144.5 874.5 M1144.5 869.5 L1139.5 874.5" stroke="#20a0ff" stroke-width="1"/><rect x="980.5" y="884" width="165.5" height="40.5" fill="#fff" stroke="#000" stroke-width="1"/><path d="M1003 895 L1011 895 M1007 891 L1007 899" stroke="#ff0000" stroke-width="1.4"/><path d="M1004.5 892.5 L1009.5 897.5 M1009.5 892.5 L1004.5 897.5" stroke="#ff0000" stroke-width="1"/><path d="M1003 913 L1011 913 M1007 909 L1007 917" stroke="#00e000" stroke-width="1.4"/><path d="M1004.5 910.5 L1009.5 915.5 M1009.5 910.5 L1004.5 915.5" stroke="#00e000" stroke-width="1"/><text x="1030" y="899.5" font-size="12" text-anchor="start" fill="#000" >wBWphase=6.3741</text><text x="1030" y="917.5" font-size="12" text-anchor="start" fill="#000" >wBWgain=2.6177</text><rect x="882.3" y="837.7" width="363.4000000000001" height="96.89999999999998" fill="none" stroke="#404040" stroke-width="1.2"/><text x="1062" y="829" font-size="12.5" text-anchor="middle" fill="#000" >Input2 Output3</text><text x="1062" y="972" font-size="12.5" text-anchor="middle" fill="#000" >Frequency [rad/sec]</text><text x="850" y="886" font-size="12.5" text-anchor="middle" fill="#000" transform="rotate(-90 850 886)" >Gain [dB]</text><text x="880.3" y="955" font-size="12" text-anchor="middle" fill="#000" >10</text><text x="887.8" y="946" font-size="8" text-anchor="start" fill="#000" >-1</text><text x="1014.9" y="955" font-size="12" text-anchor="middle" fill="#000" >10</text><text x="1022.4" y="946" font-size="8" text-anchor="start" fill="#000" >0</text><text x="1149.5" y="955" font-size="12" text-anchor="middle" fill="#000" >10</text><text x="1157.0" y="946" font-size="8" text-anchor="start" fill="#000" >1</text><rect x="882.3" y="993.8" width="363.4000000000001" height="97.20000000000005" fill="#fff"/><path d="M922.8 993.8 V1091" stroke="#000" stroke-width="1.2" stroke-dasharray="2 2.5"/><path d="M946.5 993.8 V1091" stroke="#000" stroke-width="1.2" stroke-dasharray="2 2.5"/><path d="M963.3 993.8 V1091" stroke="#000" stroke-width="1.2" stroke-dasharray="2 2.5"/><path d="M976.4 993.8 V1091" stroke="#000" stroke-width="1.2" stroke-dasharray="2 2.5"/><path d="M987.0 993.8 V1091" stroke="#000" stroke-width="1.2" stroke-dasharray="2 2.5"/><path d="M996.1 993.8 V1091" stroke="#000" stroke-width="1.2" stroke-dasharray="2 2.5"/><path d="M1003.9 993.8 V1091" stroke="#000" stroke-width="1.2" stroke-dasharray="2 2.5"/><path d="M1010.7 993.8 V1091" stroke="#000" stroke-width="1.2" stroke-dasharray="2 2.5"/><path d="M1016.9 993.8 V1091" stroke="#000" stroke-width="1.2" stroke-dasharray="2 2.5"/><path d="M1057.4 993.8 V1091" stroke="#000" stroke-width="1.2" stroke-dasharray="2 2.5"/><path d="M1081.1 993.8 V1091" stroke="#000" stroke-width="1.2" stroke-dasharray="2 2.5"/><path d="M1097.9 993.8 V1091" stroke="#000" stroke-width="1.2" stroke-dasharray="2 2.5"/><path d="M1111.0 993.8 V1091" stroke="#000" stroke-width="1.2" stroke-dasharray="2 2.5"/><path d="M1121.6 993.8 V1091" stroke="#000" stroke-width="1.2" stroke-dasharray="2 2.5"/><path d="M1130.7 993.8 V1091" stroke="#000" stroke-width="1.2" stroke-dasharray="2 2.5"/><path d="M1138.5 993.8 V1091" stroke="#000" stroke-width="1.2" stroke-dasharray="2 2.5"/><path d="M1145.3 993.8 V1091" stroke="#000" stroke-width="1.2" stroke-dasharray="2 2.5"/><path d="M1151.5 993.8 V1091" stroke="#000" stroke-width="1.2" stroke-dasharray="2 2.5"/><path d="M1192.0 993.8 V1091" stroke="#000" stroke-width="1.2" stroke-dasharray="2 2.5"/><path d="M1215.7 993.8 V1091" stroke="#000" stroke-width="1.2" stroke-dasharray="2 2.5"/><path d="M1232.5 993.8 V1091" stroke="#000" stroke-width="1.2" stroke-dasharray="2 2.5"/><path d="M882.3 1071.6 H1245.7" stroke="#000" stroke-width="1.2" stroke-dasharray="2 2.5"/><path d="M882.3 1052.1 H1245.7" stroke="#000" stroke-width="1.2" stroke-dasharray="2 2.5"/><path d="M882.3 1032.7 H1245.7" stroke="#000" stroke-width="1.2" stroke-dasharray="2 2.5"/><path d="M882.3 1013.2 H1245.7" stroke="#000" stroke-width="1.2" stroke-dasharray="2 2.5"/><text x="879.3" y="1095.5" font-size="12" text-anchor="end" fill="#000" >-400</text><text x="879.3" y="1076.06" font-size="12" text-anchor="end" fill="#000" >-300</text><text x="879.3" y="1056.62" font-size="12" text-anchor="end" fill="#000" >-200</text><text x="879.3" y="1037.18" font-size="12" text-anchor="end" fill="#000" >-100</text><text x="879.3" y="1017.74" font-size="12" text-anchor="end" fill="#000" >0</text><text x="879.3" y="998.3" font-size="12" text-anchor="end" fill="#000" >100</text><path d="M882.3 1013.2 C892.5 1013.3 930.1 1013.5 943.6 1013.8 C957.0 1014.2 956.0 1014.3 963.0 1015.3 C970.0 1016.3 977.7 1018.2 985.5 1019.8 C993.2 1021.5 1000.4 1023.6 1009.4 1025.2 C1018.4 1026.8 1026.8 1028.2 1039.3 1029.4 C1051.8 1030.6 1071.7 1031.2 1084.2 1032.4 C1096.6 1033.5 1107.5 1035.1 1114.1 1036.3 C1120.7 1037.4 1119.1 1037.3 1123.7 1039.3 C1128.2 1041.3 1135.7 1045.0 1141.6 1048.2 C1147.5 1051.5 1151.1 1055.7 1159.0 1058.7 C1166.8 1061.7 1178.9 1063.9 1188.9 1066.2 C1198.8 1068.4 1209.3 1070.4 1218.8 1072.2 C1228.3 1073.9 1241.2 1075.9 1245.7 1076.7" fill="none" stroke="#4060ff" stroke-width="1.3"/><path d="M1119.2 1039.3 L1128.2 1039.3 M1123.7 1034.8 L1123.7 1043.8" stroke="#ff0000" stroke-width="1.4"/><path d="M1121.2 1036.8 L1126.2 1041.8 M1126.2 1036.8 L1121.2 1041.8" stroke="#ff0000" stroke-width="1"/><path d="M1137.1 1048.2 L1146.1 1048.2 M1141.6 1043.7 L1141.6 1052.7" stroke="#20a0ff" stroke-width="1.4"/><path d="M1139.1 1045.7 L1144.1 1050.7 M1144.1 1045.7 L1139.1 1050.7" stroke="#20a0ff" stroke-width="1"/><rect x="882.3" y="993.8" width="363.4000000000001" height="97.20000000000005" fill="none" stroke="#404040" stroke-width="1.2"/><text x="1062" y="1128" font-size="12.5" text-anchor="middle" fill="#000" >Frequency [rad/sec]</text><text x="844" y="1042" font-size="12.5" text-anchor="middle" fill="#000" transform="rotate(-90 844 1042)" >Phase [deg]</text><text x="880.3" y="1111" font-size="12" text-anchor="middle" fill="#000" >10</text><text x="887.8" y="1102" font-size="8" text-anchor="start" fill="#000" >-1</text><text x="1014.9" y="1111" font-size="12" text-anchor="middle" fill="#000" >10</text><text x="1022.4" y="1102" font-size="8" text-anchor="start" fill="#000" >0</text><text x="1149.5" y="1111" font-size="12" text-anchor="middle" fill="#000" >10</text><text x="1157.0" y="1102" font-size="8" text-anchor="start" fill="#000" >1</text><text x="1253" y="848.0" font-size="10.5" text-anchor="start" fill="#000" letter-spacing="-0.2">rrt=1: BW is lesser of phase or gain BW</text><text x="1253" y="880.5" font-size="10.5" text-anchor="start" fill="#000" letter-spacing="-0.2">lsf=0: taup approximation is base on 2 point calculation</text><text x="1253" y="913.0" font-size="10.5" text-anchor="start" fill="#000" letter-spacing="-0.2">taup (2 points)=0.089581</text></g></svg></body></html>
